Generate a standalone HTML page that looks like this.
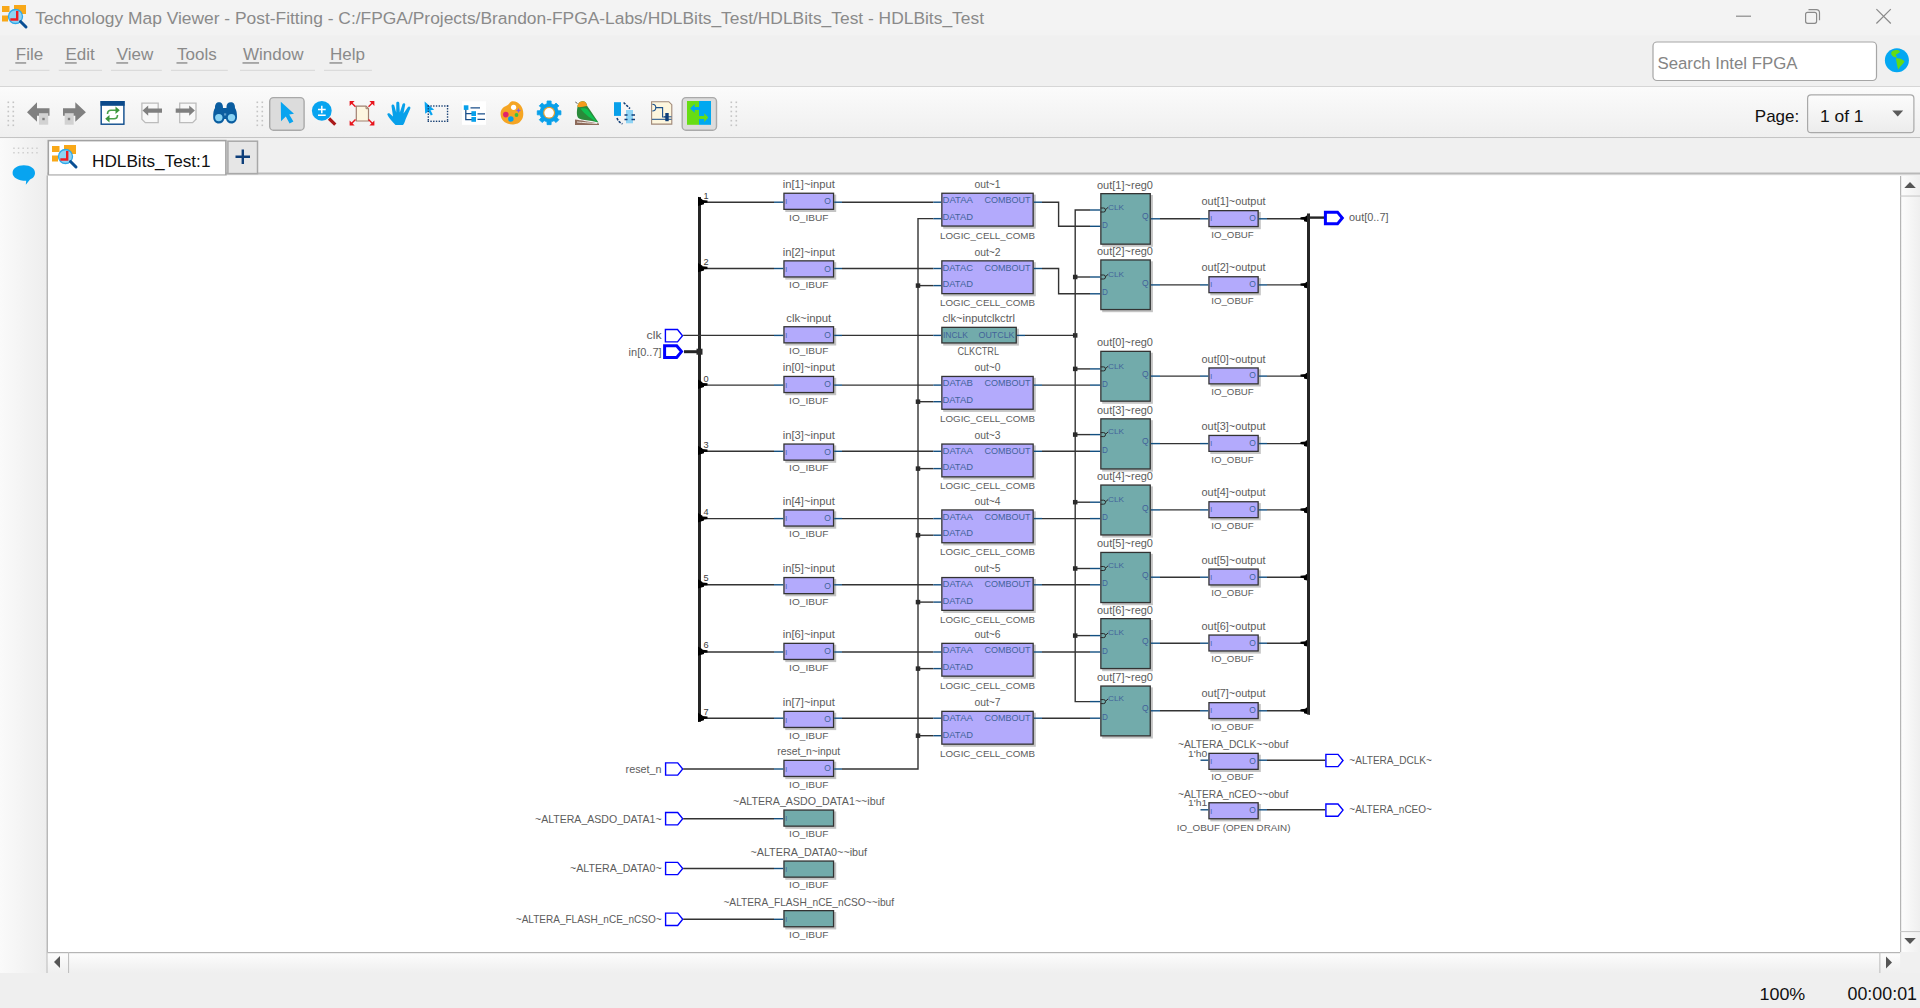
<!DOCTYPE html>
<html><head><meta charset="utf-8"><title>Technology Map Viewer</title>
<style>
html,body{margin:0;padding:0;width:1920px;height:1008px;overflow:hidden;background:#f0f0f0;font-family:"Liberation Sans", sans-serif;}
svg{position:absolute;left:0;top:0;}
text{font-family:"Liberation Sans", sans-serif;}
</style></head><body>
<svg width="1920" height="1008" viewBox="0 0 1920 1008">
<defs>
<linearGradient id="tb" x1="0" y1="0" x2="0" y2="1"><stop offset="0" stop-color="#fbfbfb"/><stop offset="1" stop-color="#efefef"/></linearGradient>
<linearGradient id="side" x1="0" y1="0" x2="1" y2="0"><stop offset="0" stop-color="#fafafa"/><stop offset="1" stop-color="#ededed"/></linearGradient>
<linearGradient id="vsb" x1="0" y1="0" x2="1" y2="0"><stop offset="0" stop-color="#fdfdfd"/><stop offset="1" stop-color="#efefef"/></linearGradient>
<linearGradient id="combo" x1="0" y1="0" x2="0" y2="1"><stop offset="0" stop-color="#fcfcfc"/><stop offset="1" stop-color="#ececec"/></linearGradient>
<linearGradient id="hsb" x1="0" y1="0" x2="0" y2="1"><stop offset="0" stop-color="#fdfdfd"/><stop offset="1" stop-color="#efefef"/></linearGradient>
</defs>
<!-- title bar -->
<rect x="0" y="0" width="1920" height="35.2" fill="#f3f3f3"/>
<g transform="translate(2,2) scale(1.0)">
<rect x="0" y="4" width="7.5" height="6" fill="#f8a818"/>
<rect x="0" y="13.5" width="6" height="6" fill="#f8a818"/>
<rect x="12" y="3" width="12" height="9" fill="#f8a818"/>
<circle cx="13.5" cy="14.5" r="7" fill="#8fd3f3" stroke="#2ea9ea" stroke-width="1.3"/>
<path d="M15.2,9 V17.5 H8.3" fill="none" stroke="#ee1c25" stroke-width="2.4"/>
<path d="M18.5,19.5 L24,25" stroke="#0a4f94" stroke-width="3" stroke-linecap="round"/>
</g>
<text x="35.2" y="23.7" font-size="17.4" fill="#8a8a8a">Technology Map Viewer - Post-Fitting - C:/FPGA/Projects/Brandon-FPGA-Labs/HDLBits_Test/HDLBits_Test - HDLBits_Test</text>
<rect x="1736" y="15.6" width="15" height="1.2" fill="#8a8a8a"/>
<path d="M1808.5,9.6 h7.8 a3.2,3.2 0 0 1 3.2,3.2 v7.5" fill="none" stroke="#8a8a8a" stroke-width="1.2"/>
<rect x="1805.6" y="12.3" width="11" height="11" rx="2" fill="none" stroke="#8a8a8a" stroke-width="1.2"/>
<path d="M1876.4,9.1 L1890.8,23.5 M1890.8,9.1 L1876.4,23.5" stroke="#8a8a8a" stroke-width="1.2"/>
<!-- menu bar -->
<rect x="0" y="35.2" width="1920" height="51.5" fill="#f0f0f0"/>
<rect x="0" y="86" width="1920" height="1" fill="#d6d6d6"/>
<text x="15.8" y="60.3" font-size="17" fill="#8a8a8a">File</text><rect x="15.3" y="62.3" width="10.884375" height="1.3" fill="#858585"/><rect x="9" y="69.8" width="40.5" height="1" fill="#d6d6d6"/><text x="65.4" y="60.3" font-size="17" fill="#8a8a8a">Edit</text><rect x="64.9" y="62.3" width="11.8390625" height="1.3" fill="#858585"/><rect x="58.75" y="69.8" width="43.25" height="1" fill="#d6d6d6"/><text x="116.8" y="60.3" font-size="17" fill="#8a8a8a">View</text><rect x="116.3" y="62.3" width="11.8390625" height="1.3" fill="#858585"/><rect x="111" y="69.8" width="50.80000000000001" height="1" fill="#d6d6d6"/><text x="177" y="60.3" font-size="17" fill="#8a8a8a">Tools</text><rect x="176.5" y="62.3" width="10.884375" height="1.3" fill="#858585"/><rect x="171" y="69.8" width="56.80000000000001" height="1" fill="#d6d6d6"/><text x="243" y="60.3" font-size="17" fill="#8a8a8a">Window</text><rect x="242.5" y="62.3" width="16.5453125" height="1.3" fill="#858585"/><rect x="240" y="69.8" width="75" height="1" fill="#d6d6d6"/><text x="330" y="60.3" font-size="17" fill="#8a8a8a">Help</text><rect x="329.5" y="62.3" width="12.7765625" height="1.3" fill="#858585"/><rect x="324" y="69.8" width="47.89999999999998" height="1" fill="#d6d6d6"/>
<rect x="1653" y="42" width="223.5" height="38.5" rx="4" fill="#fff" stroke="#a6a6a6" stroke-width="1.2"/>
<text x="1657.5" y="69.4" font-size="16.8" fill="#858585">Search Intel FPGA</text>
<circle cx="1896.9" cy="60.2" r="12" fill="#04a8f2"/>
<path d="M1891.2,53.3 C1891.2,51 1893.8,49.9 1897,49.9 C1899.2,49.9 1900.3,50.8 1899.8,52.3 C1898.5,53.5 1896.3,53.8 1895.8,55.3 C1896.2,56.3 1897.3,56.8 1896.8,57.4 C1894,57.6 1891.2,55.8 1891.2,53.3 Z" fill="#64dc14"/>
<path d="M1895.8,58.4 C1899,58 1902.2,59.2 1904.6,61.3 C1903.4,64 1900.4,65.8 1898.3,69.6 C1897.3,67 1896.8,63.5 1896.3,60.8 Z" fill="#64dc14"/>
<!-- toolbar -->
<rect x="0" y="87" width="1920" height="50.5" fill="url(#tb)"/>
<rect x="0" y="137" width="1920" height="1.2" fill="#c4c4c4"/>
<rect x="7.5" y="101.5" width="1.6" height="1.6" fill="#c4c4c4"/><rect x="12.5" y="101.5" width="1.6" height="1.6" fill="#c4c4c4"/><rect x="7.5" y="106.1" width="1.6" height="1.6" fill="#c4c4c4"/><rect x="12.5" y="106.1" width="1.6" height="1.6" fill="#c4c4c4"/><rect x="7.5" y="110.7" width="1.6" height="1.6" fill="#c4c4c4"/><rect x="12.5" y="110.7" width="1.6" height="1.6" fill="#c4c4c4"/><rect x="7.5" y="115.3" width="1.6" height="1.6" fill="#c4c4c4"/><rect x="12.5" y="115.3" width="1.6" height="1.6" fill="#c4c4c4"/><rect x="7.5" y="119.9" width="1.6" height="1.6" fill="#c4c4c4"/><rect x="12.5" y="119.9" width="1.6" height="1.6" fill="#c4c4c4"/><rect x="7.5" y="124.5" width="1.6" height="1.6" fill="#c4c4c4"/><rect x="12.5" y="124.5" width="1.6" height="1.6" fill="#c4c4c4"/>
<rect x="256.5" y="101.5" width="1.6" height="1.6" fill="#c4c4c4"/><rect x="261.5" y="101.5" width="1.6" height="1.6" fill="#c4c4c4"/><rect x="256.5" y="106.1" width="1.6" height="1.6" fill="#c4c4c4"/><rect x="261.5" y="106.1" width="1.6" height="1.6" fill="#c4c4c4"/><rect x="256.5" y="110.7" width="1.6" height="1.6" fill="#c4c4c4"/><rect x="261.5" y="110.7" width="1.6" height="1.6" fill="#c4c4c4"/><rect x="256.5" y="115.3" width="1.6" height="1.6" fill="#c4c4c4"/><rect x="261.5" y="115.3" width="1.6" height="1.6" fill="#c4c4c4"/><rect x="256.5" y="119.9" width="1.6" height="1.6" fill="#c4c4c4"/><rect x="261.5" y="119.9" width="1.6" height="1.6" fill="#c4c4c4"/><rect x="256.5" y="124.5" width="1.6" height="1.6" fill="#c4c4c4"/><rect x="261.5" y="124.5" width="1.6" height="1.6" fill="#c4c4c4"/>
<rect x="730.5" y="101.5" width="1.6" height="1.6" fill="#c4c4c4"/><rect x="735.5" y="101.5" width="1.6" height="1.6" fill="#c4c4c4"/><rect x="730.5" y="106.1" width="1.6" height="1.6" fill="#c4c4c4"/><rect x="735.5" y="106.1" width="1.6" height="1.6" fill="#c4c4c4"/><rect x="730.5" y="110.7" width="1.6" height="1.6" fill="#c4c4c4"/><rect x="735.5" y="110.7" width="1.6" height="1.6" fill="#c4c4c4"/><rect x="730.5" y="115.3" width="1.6" height="1.6" fill="#c4c4c4"/><rect x="735.5" y="115.3" width="1.6" height="1.6" fill="#c4c4c4"/><rect x="730.5" y="119.9" width="1.6" height="1.6" fill="#c4c4c4"/><rect x="735.5" y="119.9" width="1.6" height="1.6" fill="#c4c4c4"/><rect x="730.5" y="124.5" width="1.6" height="1.6" fill="#c4c4c4"/><rect x="735.5" y="124.5" width="1.6" height="1.6" fill="#c4c4c4"/>
<path d="M27,112.3 L37,102.3 L37,108.3 L49.5,108.3 L49.5,115.8 L37,115.8 L37,121.8 Z" fill="#808080"/><rect x="39" y="113.2" width="9.2" height="11.5" fill="#d2d2d2"/><rect x="42.3" y="117.8" width="2.4" height="2.4" fill="#808080"/>
<path d="M85.9,112.3 L75.3,102.3 L75.3,108.3 L63,108.3 L63,115.8 L75.3,115.8 L75.3,121.8 Z" fill="#808080"/><rect x="64.7" y="113.2" width="9" height="11.5" fill="#d2d2d2"/><rect x="67.8" y="117.8" width="2.4" height="2.4" fill="#808080"/>
<rect x="101.2" y="101.7" width="22.7" height="22.5" fill="#fff" stroke="#0b4a8b" stroke-width="1.4"/><rect x="100.5" y="101" width="24.1" height="4.8" fill="#0b4a8b"/><path d="M107.5,114 C107.5,111.5 108.5,110.2 111,110.2 H116.5" fill="none" stroke="#4aa04a" stroke-width="1.6"/><path d="M115.5,106.5 L119.8,110.2 L115.5,114 Z" fill="#3c963c"/><path d="M117.5,115 C117.5,117.5 116.5,118.8 114,118.8 H108.5" fill="none" stroke="#4aa04a" stroke-width="1.6"/><path d="M109.5,115 L105.2,118.8 L109.5,122.5 Z" fill="#3c963c"/>
<path d="M141.9,103.2 H158.2 V122.6 H145.3 L141.9,119.2 Z" fill="#f8f8f8" stroke="#bcbcbc" stroke-width="1.3"/><path d="M142.5,110.6 L148.2,105.5 V108.4 H162 V112.7 H148.2 V115.8 Z" fill="#808080"/>
<path d="M179.7,103.2 H196 V119.2 L192.6,122.6 H179.7 Z" fill="#f8f8f8" stroke="#bcbcbc" stroke-width="1.3"/><path d="M194.9,110.6 L189.2,105.5 V108.4 H175.7 V112.7 H189.2 V115.8 Z" fill="#808080"/>
<g fill="#0a5da0"><path d="M215,108 C215,104 216.5,102.3 219,102.3 C221.5,102.3 223,104 223,108 L224.5,108 C225.5,108 226.5,108 226.5,108 V107 C226.5,104 228,102.3 230.8,102.3 C233.5,102.3 235,104 235,108 C236.5,110 237,113 237,117 C237,121 234.5,123.5 231.5,123.5 C228.5,123.5 226.5,121.5 226,119 H224.3 C223.8,121.5 221.8,123.5 218.8,123.5 C215.5,123.5 213.2,121 213.2,117 C213.2,113 213.5,110 215,108 Z"/></g><circle cx="218.8" cy="117.6" r="3.7" fill="#88d2f3"/><circle cx="231.5" cy="117.6" r="3.7" fill="#88d2f3"/><rect x="224" y="113.3" width="2.2" height="2.2" fill="#5a9ac8"/>
<rect x="269.7" y="97.6" width="34.4" height="32.6" rx="3.8" fill="#dcdcdc" stroke="#a9a9a9" stroke-width="1.4"/><path d="M280.8,101.8 L294,113.8 L289.2,114.4 L293.4,121.6 L289.6,123.6 L285.8,116.6 L281,121.2 Z" fill="#08a4f0"/>
<path d="M329,118.5 L335.3,124.6" stroke="#aa1a1a" stroke-width="3.2"/><circle cx="321.8" cy="110.8" r="9.9" fill="#08a4f0"/><path d="M318,109.5 H325.7 M321.8,105.8 V113.2 M318,115.3 H325.7" stroke="#fff" stroke-width="1.5"/>
<path d="M356.3,106.2 H366 L368.5,108.7 V121 H356.3 Z" fill="#fdf6e0" stroke="#a08070" stroke-width="1.2"/><path d="M366,106.2 V108.7 H368.5" fill="none" stroke="#a08070" stroke-width="1"/><g stroke="#e8141c" stroke-width="1.4" fill="none"><path d="M350.5,101.8 L355.5,106.8"/><path d="M373.5,101.8 L368.5,106.8"/><path d="M350.5,124.6 L355.5,119.6"/><path d="M373.5,124.6 L368.5,119.6"/></g><g fill="#e8141c"><path d="M349.6,100.9 h5 l-5,5 z"/><path d="M374.4,100.9 h-5 l5,5 z"/><path d="M349.6,125.5 h5 l-5,-5 z"/><path d="M374.4,125.5 h-5 l5,-5 z"/></g>
<path d="M395.5,125 C392,121.5 388.5,117.5 387.4,114.8 C387,113.5 388.5,112.8 390,113.8 L393,116.5 L391.5,106 C391.3,104.3 393.8,103.8 394.3,105.5 L396.2,112.5 L396.3,103 C396.3,101.3 399.2,101.3 399.3,103 L399.8,112.5 L402.5,104.2 C403,102.5 405.6,103 405.2,104.8 L403.5,113.5 L407.8,107.2 C408.8,105.8 411,106.8 410.3,108.4 L405.5,119.5 C404.8,122 404,124 403,125 Z" fill="#08a0ea"/>
<path d="M424.6,101.5 L434.2,109.8 L430.5,110.2 L432.8,114.6 L430.8,115.5 L428.6,111.2 L425.2,113.8 Z" fill="#08a4f0"/><g fill="#163e72"><rect x="427.60" y="105.3" width="1.4" height="1.4"/><rect x="427.60" y="120.6" width="1.4" height="1.4"/><rect x="430.35" y="105.3" width="1.4" height="1.4"/><rect x="430.35" y="120.6" width="1.4" height="1.4"/><rect x="433.10" y="105.3" width="1.4" height="1.4"/><rect x="433.10" y="120.6" width="1.4" height="1.4"/><rect x="435.85" y="105.3" width="1.4" height="1.4"/><rect x="435.85" y="120.6" width="1.4" height="1.4"/><rect x="438.60" y="105.3" width="1.4" height="1.4"/><rect x="438.60" y="120.6" width="1.4" height="1.4"/><rect x="441.35" y="105.3" width="1.4" height="1.4"/><rect x="441.35" y="120.6" width="1.4" height="1.4"/><rect x="444.10" y="105.3" width="1.4" height="1.4"/><rect x="444.10" y="120.6" width="1.4" height="1.4"/><rect x="446.85" y="105.3" width="1.4" height="1.4"/><rect x="446.85" y="120.6" width="1.4" height="1.4"/><rect x="427.6" y="105.30" width="1.4" height="1.4"/><rect x="446.85" y="105.30" width="1.4" height="1.4"/><rect x="427.6" y="108.05" width="1.4" height="1.4"/><rect x="446.85" y="108.05" width="1.4" height="1.4"/><rect x="427.6" y="110.80" width="1.4" height="1.4"/><rect x="446.85" y="110.80" width="1.4" height="1.4"/><rect x="427.6" y="113.55" width="1.4" height="1.4"/><rect x="446.85" y="113.55" width="1.4" height="1.4"/><rect x="427.6" y="116.30" width="1.4" height="1.4"/><rect x="446.85" y="116.30" width="1.4" height="1.4"/><rect x="427.6" y="119.05" width="1.4" height="1.4"/><rect x="446.85" y="119.05" width="1.4" height="1.4"/></g>
<rect x="462" y="101.3" width="24" height="23.5" fill="#fff"/><g fill="none" stroke="#1a4f8a" stroke-width="1.3"><path d="M465.8,109 V119.6 H472 M465.8,113.6 H472"/><path d="M470.5,107.8 H480 M477.5,113.8 H485 M477.5,119.4 H485"/></g><rect x="463.8" y="105.3" width="4.6" height="4.6" fill="#08a0ea"/><rect x="471.4" y="111.2" width="4.6" height="4.8" fill="#08a0ea"/><rect x="471.4" y="117" width="4.6" height="4.8" fill="#08a0ea"/>
<path d="M513,101.3 C519,101.5 523.5,107 523.3,114 C523.2,119.5 520,124 513.5,124.4 C506.5,124.8 501,121 500.6,114.5 C500.3,110 503,107 506,106 C508,105.3 509,104 510,102.5 C510.8,101.6 511.8,101.3 513,101.3 Z" fill="#f5a524"/><circle cx="513.6" cy="107.3" r="2.6" fill="#fff"/><circle cx="505.8" cy="114.6" r="2.8" fill="#e2246a"/><circle cx="510.8" cy="119" r="2.8" fill="#08a0ea"/><circle cx="516.5" cy="115" r="1.9" fill="#3cc040"/><path d="M518.5,108 l0.8,1.8 l1.8,0.7 l-1.8,0.7 l-0.8,1.8 l-0.8,-1.8 l-1.8,-0.7 l1.8,-0.7 z" fill="#8a5ae0"/>
<path d="M547.07,100.97 L551.13,100.97 L551.15,103.73 L554.06,104.93 L556.03,103.00 L558.90,105.87 L556.97,107.84 L558.17,110.75 L560.93,110.77 L560.93,114.83 L558.17,114.85 L556.97,117.76 L558.90,119.73 L556.03,122.60 L554.06,120.67 L551.15,121.87 L551.13,124.63 L547.07,124.63 L547.05,121.87 L544.14,120.67 L542.17,122.60 L539.30,119.73 L541.23,117.76 L540.03,114.85 L537.27,114.83 L537.27,110.77 L540.03,110.75 L541.23,107.84 L539.30,105.87 L542.17,103.00 L544.14,104.93 L547.05,103.73 Z" fill="#08a0ea" stroke="#08a0ea" stroke-width="0.8" stroke-linejoin="round"/><circle cx="549.1" cy="112.8" r="6" fill="#e8a030"/><circle cx="549.1" cy="112.8" r="4.8" fill="#fff"/>
<path d="M575,125 L575,119.5 C580,120 590,122 599,123.5 V125 Z" fill="#8c6a5a"/><path d="M577,122 C583,122.5 590,123 597,123.5" stroke="#f4eeea" stroke-width="0.9" fill="none"/><path d="M577.5,107 C577.5,104 579.5,101.5 582.5,101.3 C585,101.2 586.8,103 587.2,106 C590,110 594,116 598.5,122.5 L592,121 C587,120 582,120 579,118.5 C576.5,117 576.5,112 577.5,107 Z" fill="#2a8a3a"/><path d="M577.5,107 C577.5,104 579.5,101.5 582.5,101.3 C585,101.2 586.8,103 587.2,106 C584,106.5 580,107.5 577.5,107 Z" fill="#f59a1c"/><path d="M580.5,108.5 C584,108 587,108 588,110 C591,114 594,118 597.5,122.5 C592,119 585,115 580.5,108.5 Z" fill="#10c050"/><path d="M575.3,102 L577.5,103.5" stroke="#333" stroke-width="0.8"/>
<rect x="614" y="102.2" width="7" height="13.7" fill="#08a0ea"/><path d="M623.6,102.5 L630,108.6 M617,118 C618,121 620,123 622.5,123.8" fill="none" stroke="#123f78" stroke-width="1.6" stroke-dasharray="2.5,1.2"/><rect x="626" y="110" width="7" height="13.3" fill="#8ed3f4"/><path d="M624.5,115 H627.5 M631.5,115 H635 M624.5,119.5 H627.5 M631.5,119.5 H635" stroke="#123f78" stroke-width="1.3"/>
<path d="M651.6,101.7 H668.8 L671.8,104.7 V124.1 H651.6 Z" fill="#fdf6de" stroke="#a08878" stroke-width="1.1"/><path d="M652.3,104.2 C654.5,104.2 655.8,105.8 655.8,107.6 C655.8,109.4 654.5,111 652.3,111" fill="none" stroke="#1a4f8a" stroke-width="1.1"/><path d="M655.8,107.6 H662.6 V117 H666" fill="none" stroke="#1a4f8a" stroke-width="1.1"/><path d="M652,119.3 H671.5 M664,116.8 H671.5" stroke="#1a4f8a" stroke-width="1"/><rect x="665.3" y="113" width="3.4" height="8.2" fill="#0e3f7a"/>
<rect x="682.2" y="97.6" width="34.3" height="32.6" rx="3.8" fill="#dcdcdc" stroke="#a9a9a9" stroke-width="1.4"/><rect x="687" y="101" width="12" height="23.8" fill="#66dd14"/><rect x="699" y="101" width="12" height="23.8" fill="#00a8f0"/><path d="M690.1,108.5 L694.7,104.1 V106.9 H699 V110.1 H694.7 V112.8 Z" fill="#00a8f0"/><path d="M708.3,117.5 L704.3,113.2 V116 H699 V119 H704.3 V122 Z" fill="#66dd14"/>
<text x="1754.8" y="122" font-size="17" fill="#111">Page:</text>
<rect x="1807.6" y="94.9" width="106.3" height="37.8" rx="3.5" fill="url(#combo)" stroke="#a9a9a9" stroke-width="1.2"/>
<text x="1820" y="122" font-size="17.4" fill="#111">1 of 1</text>
<path d="M1892.2,110.6 h11 l-5.5,5.8 z" fill="#5a5a5a"/>
<!-- tab area -->
<rect x="0" y="138.2" width="1920" height="37.8" fill="#f0f0f0"/>
<rect x="0" y="138.2" width="47.5" height="834.8" fill="url(#side)"/>
<g fill="#cfcfcf"><rect x="13.2" y="147.5" width="1.5" height="1.5"/><rect x="13.2" y="152.0" width="1.5" height="1.5"/><rect x="17.799999999999997" y="147.5" width="1.5" height="1.5"/><rect x="17.799999999999997" y="152.0" width="1.5" height="1.5"/><rect x="22.4" y="147.5" width="1.5" height="1.5"/><rect x="22.4" y="152.0" width="1.5" height="1.5"/><rect x="27.0" y="147.5" width="1.5" height="1.5"/><rect x="27.0" y="152.0" width="1.5" height="1.5"/><rect x="31.599999999999998" y="147.5" width="1.5" height="1.5"/><rect x="31.599999999999998" y="152.0" width="1.5" height="1.5"/><rect x="36.2" y="147.5" width="1.5" height="1.5"/><rect x="36.2" y="152.0" width="1.5" height="1.5"/></g>
<path d="M23.8,165.3 C30.5,165.3 35,168.5 35,173 C35,176.5 32.5,178.5 30,179.5 L25.8,184.8 L26.2,180.8 C18,180.8 12.6,177.5 12.6,173 C12.6,168.5 17.3,165.3 23.8,165.3 Z" fill="#08a4f0"/>
<rect x="47.5" y="172.5" width="1873" height="2" fill="#b9b9b9"/>
<rect x="48.3" y="140.6" width="177.6" height="34.6" fill="#fff" stroke="#a2a2a2" stroke-width="1.6"/>
<g transform="translate(52,142) scale(1.0)">
<rect x="0" y="4" width="7.5" height="6" fill="#f8a818"/>
<rect x="0" y="13.5" width="6" height="6" fill="#f8a818"/>
<rect x="12" y="3" width="12" height="9" fill="#f8a818"/>
<circle cx="13.5" cy="14.5" r="7" fill="#8fd3f3" stroke="#2ea9ea" stroke-width="1.3"/>
<path d="M15.2,9 V17.5 H8.3" fill="none" stroke="#ee1c25" stroke-width="2.4"/>
<path d="M18.5,19.5 L24,25" stroke="#0a4f94" stroke-width="3" stroke-linecap="round"/>
</g>
<text x="92" y="167" font-size="17.2" fill="#111">HDLBits_Test:1</text>
<rect x="227.9" y="141.2" width="29.6" height="32.4" fill="#e6e6e6" stroke="#a8a8a8" stroke-width="1.5"/>
<path d="M235.5,156.8 H250 M242.8,149.5 V164" stroke="#0e3f7a" stroke-width="2.4"/>
<!-- content -->
<rect x="47.5" y="175.5" width="1852.8" height="776.5" fill="#fff"/>
<rect x="46" y="175.5" width="0.9" height="797.5" fill="#dadada"/><rect x="46.8" y="175.5" width="1.2" height="797.5" fill="#b8b8b8"/>
<!-- vertical scrollbar -->
<rect x="1900.3" y="176" width="19.7" height="776" fill="url(#vsb)"/>
<rect x="1900" y="176" width="1.2" height="776" fill="#b5b5b5"/>
<rect x="1900" y="195.5" width="20" height="1.1" fill="#c8c8c8"/>
<path d="M1904.3,188 L1910,182 L1915.8,188 Z" fill="#555"/>
<rect x="1900" y="931" width="20" height="1.1" fill="#c8c8c8"/>
<path d="M1904.3,938 L1910,944 L1915.8,938 Z" fill="#555"/>
<!-- horizontal scrollbar -->
<rect x="47.5" y="952.5" width="1853" height="20.5" fill="url(#hsb)"/>
<rect x="47.5" y="952" width="1853" height="1.2" fill="#b5b5b5"/>
<rect x="68" y="952" width="1.1" height="21" fill="#c0c0c0"/>
<path d="M54,962 L60,956 L60,968 Z" fill="#555"/>
<rect x="1879.3" y="952" width="1.1" height="21" fill="#c0c0c0"/>
<path d="M1892,962.5 L1886,956.5 L1886,968.5 Z" fill="#555"/>
<rect x="1900.3" y="952" width="19.7" height="21" fill="#f0f0f0"/>
<!-- status -->
<rect x="0" y="973" width="1920" height="35" fill="#efefef"/>
<text x="1759.5" y="1000" font-size="17.4" fill="#111" textLength="45.8" lengthAdjust="spacingAndGlyphs">100%</text>
<text x="1847.5" y="1000" font-size="17.8" fill="#111" textLength="69.5" lengthAdjust="spacingAndGlyphs">00:00:01</text>
<!-- schematic -->
<g>
<line x1="699.5" y1="197" x2="699.5" y2="721.8" stroke="#262626" stroke-width="3"/>
<path d="M701.0,202.2 L774,202.2" fill="none" stroke="#333333" stroke-width="1.4" stroke-linejoin="miter"/>
<path d="M698.0,196.7 L702.5,199.39999999999998 L702.5,200.0 L707.5,200.39999999999998 L707.5,202.6 L704.0,203.0 L704.0,204.2 L698.0,206.0 Z" fill="#000"/>
<text x="703.6" y="198.6" font-size="9.2" fill="#3a3a3a" text-anchor="start" >1</text>
<rect x="785.3" y="194.59999999999997" width="50.90000000000009" height="17.400000000000006" fill="#c4c4c4"/>
<rect x="783.9499999999999" y="193.24999999999997" width="49.600000000000094" height="16.100000000000005" fill="#b3aafc" stroke="#333" stroke-width="1.3"/>
<line x1="774" y1="202.2" x2="783.3" y2="202.2" stroke="#134f80" stroke-width="1.4"/>
<line x1="834.2" y1="202.2" x2="842" y2="202.2" stroke="#134f80" stroke-width="1.4"/>
<text x="785.3" y="204.39999999999998" font-size="7" fill="#42639a" text-anchor="start" >I</text>
<text x="824.3" y="204.2" font-size="8.5" fill="#42639a" text-anchor="start" >O</text>
<text x="808.75" y="188.09999999999997" font-size="11" fill="#5c5c5c" text-anchor="middle" textLength="52" lengthAdjust="spacingAndGlyphs" >in[1]~input</text>
<text x="808.75" y="220.49999999999997" font-size="9.5" fill="#5c5c5c" text-anchor="middle" textLength="39.3" lengthAdjust="spacingAndGlyphs" >IO_IBUF</text>
<path d="M701.0,268.5 L774,268.5" fill="none" stroke="#333333" stroke-width="1.4" stroke-linejoin="miter"/>
<path d="M698.0,263.0 L702.5,265.7 L702.5,266.3 L707.5,266.7 L707.5,268.9 L704.0,269.3 L704.0,270.5 L698.0,272.3 Z" fill="#000"/>
<text x="703.6" y="264.9" font-size="9.2" fill="#3a3a3a" text-anchor="start" >2</text>
<rect x="785.3" y="262.2" width="50.90000000000009" height="17.400000000000034" fill="#c4c4c4"/>
<rect x="783.9499999999999" y="260.84999999999997" width="49.600000000000094" height="16.100000000000033" fill="#b3aafc" stroke="#333" stroke-width="1.3"/>
<line x1="774" y1="268.5" x2="783.3" y2="268.5" stroke="#134f80" stroke-width="1.4"/>
<line x1="834.2" y1="268.5" x2="842" y2="268.5" stroke="#134f80" stroke-width="1.4"/>
<text x="785.3" y="272.0" font-size="7" fill="#42639a" text-anchor="start" >I</text>
<text x="824.3" y="271.8" font-size="8.5" fill="#42639a" text-anchor="start" >O</text>
<text x="808.75" y="255.7" font-size="11" fill="#5c5c5c" text-anchor="middle" textLength="52" lengthAdjust="spacingAndGlyphs" >in[2]~input</text>
<text x="808.75" y="288.1" font-size="9.5" fill="#5c5c5c" text-anchor="middle" textLength="39.3" lengthAdjust="spacingAndGlyphs" >IO_IBUF</text>
<path d="M701.0,385.1 L774,385.1" fill="none" stroke="#333333" stroke-width="1.4" stroke-linejoin="miter"/>
<path d="M698.0,379.6 L702.5,382.3 L702.5,382.90000000000003 L707.5,383.3 L707.5,385.5 L704.0,385.90000000000003 L704.0,387.1 L698.0,388.90000000000003 Z" fill="#000"/>
<text x="703.6" y="381.5" font-size="9.2" fill="#3a3a3a" text-anchor="start" >0</text>
<rect x="785.3" y="377.8" width="50.90000000000009" height="17.400000000000034" fill="#c4c4c4"/>
<rect x="783.9499999999999" y="376.45" width="49.600000000000094" height="16.100000000000033" fill="#b3aafc" stroke="#333" stroke-width="1.3"/>
<line x1="774" y1="385.1" x2="783.3" y2="385.1" stroke="#134f80" stroke-width="1.4"/>
<line x1="834.2" y1="385.1" x2="842" y2="385.1" stroke="#134f80" stroke-width="1.4"/>
<text x="785.3" y="387.6" font-size="7" fill="#42639a" text-anchor="start" >I</text>
<text x="824.3" y="387.40000000000003" font-size="8.5" fill="#42639a" text-anchor="start" >O</text>
<text x="808.75" y="371.3" font-size="11" fill="#5c5c5c" text-anchor="middle" textLength="52" lengthAdjust="spacingAndGlyphs" >in[0]~input</text>
<text x="808.75" y="403.70000000000005" font-size="9.5" fill="#5c5c5c" text-anchor="middle" textLength="39.3" lengthAdjust="spacingAndGlyphs" >IO_IBUF</text>
<path d="M701.0,451.3 L774,451.3" fill="none" stroke="#333333" stroke-width="1.4" stroke-linejoin="miter"/>
<path d="M698.0,445.8 L702.5,448.5 L702.5,449.1 L707.5,449.5 L707.5,451.7 L704.0,452.1 L704.0,453.3 L698.0,455.1 Z" fill="#000"/>
<text x="703.6" y="447.7" font-size="9.2" fill="#3a3a3a" text-anchor="start" >3</text>
<rect x="785.3" y="445.4" width="50.90000000000009" height="17.400000000000034" fill="#c4c4c4"/>
<rect x="783.9499999999999" y="444.04999999999995" width="49.600000000000094" height="16.100000000000033" fill="#b3aafc" stroke="#333" stroke-width="1.3"/>
<line x1="774" y1="451.3" x2="783.3" y2="451.3" stroke="#134f80" stroke-width="1.4"/>
<line x1="834.2" y1="451.3" x2="842" y2="451.3" stroke="#134f80" stroke-width="1.4"/>
<text x="785.3" y="455.2" font-size="7" fill="#42639a" text-anchor="start" >I</text>
<text x="824.3" y="455.0" font-size="8.5" fill="#42639a" text-anchor="start" >O</text>
<text x="808.75" y="438.9" font-size="11" fill="#5c5c5c" text-anchor="middle" textLength="52" lengthAdjust="spacingAndGlyphs" >in[3]~input</text>
<text x="808.75" y="471.3" font-size="9.5" fill="#5c5c5c" text-anchor="middle" textLength="39.3" lengthAdjust="spacingAndGlyphs" >IO_IBUF</text>
<path d="M701.0,518.6 L774,518.6" fill="none" stroke="#333333" stroke-width="1.4" stroke-linejoin="miter"/>
<path d="M698.0,513.1 L702.5,515.8000000000001 L702.5,516.4 L707.5,516.8000000000001 L707.5,519.0 L704.0,519.4 L704.0,520.6 L698.0,522.4 Z" fill="#000"/>
<text x="703.6" y="515.0" font-size="9.2" fill="#3a3a3a" text-anchor="start" >4</text>
<rect x="785.3" y="511.3" width="50.90000000000009" height="17.400000000000034" fill="#c4c4c4"/>
<rect x="783.9499999999999" y="509.95" width="49.600000000000094" height="16.100000000000033" fill="#b3aafc" stroke="#333" stroke-width="1.3"/>
<line x1="774" y1="518.6" x2="783.3" y2="518.6" stroke="#134f80" stroke-width="1.4"/>
<line x1="834.2" y1="518.6" x2="842" y2="518.6" stroke="#134f80" stroke-width="1.4"/>
<text x="785.3" y="521.1" font-size="7" fill="#42639a" text-anchor="start" >I</text>
<text x="824.3" y="520.9" font-size="8.5" fill="#42639a" text-anchor="start" >O</text>
<text x="808.75" y="504.8" font-size="11" fill="#5c5c5c" text-anchor="middle" textLength="52" lengthAdjust="spacingAndGlyphs" >in[4]~input</text>
<text x="808.75" y="537.2" font-size="9.5" fill="#5c5c5c" text-anchor="middle" textLength="39.3" lengthAdjust="spacingAndGlyphs" >IO_IBUF</text>
<path d="M701.0,584.8 L774,584.8" fill="none" stroke="#333333" stroke-width="1.4" stroke-linejoin="miter"/>
<path d="M698.0,579.3 L702.5,582.0 L702.5,582.5999999999999 L707.5,583.0 L707.5,585.1999999999999 L704.0,585.5999999999999 L704.0,586.8 L698.0,588.5999999999999 Z" fill="#000"/>
<text x="703.6" y="581.1999999999999" font-size="9.2" fill="#3a3a3a" text-anchor="start" >5</text>
<rect x="785.3" y="578.9" width="50.90000000000009" height="17.399999999999977" fill="#c4c4c4"/>
<rect x="783.9499999999999" y="577.55" width="49.600000000000094" height="16.099999999999977" fill="#b3aafc" stroke="#333" stroke-width="1.3"/>
<line x1="774" y1="584.8" x2="783.3" y2="584.8" stroke="#134f80" stroke-width="1.4"/>
<line x1="834.2" y1="584.8" x2="842" y2="584.8" stroke="#134f80" stroke-width="1.4"/>
<text x="785.3" y="588.6999999999999" font-size="7" fill="#42639a" text-anchor="start" >I</text>
<text x="824.3" y="588.4999999999999" font-size="8.5" fill="#42639a" text-anchor="start" >O</text>
<text x="808.75" y="572.4" font-size="11" fill="#5c5c5c" text-anchor="middle" textLength="52" lengthAdjust="spacingAndGlyphs" >in[5]~input</text>
<text x="808.75" y="604.8" font-size="9.5" fill="#5c5c5c" text-anchor="middle" textLength="39.3" lengthAdjust="spacingAndGlyphs" >IO_IBUF</text>
<path d="M701.0,652.0 L774,652.0" fill="none" stroke="#333333" stroke-width="1.4" stroke-linejoin="miter"/>
<path d="M698.0,646.5 L702.5,649.2 L702.5,649.8 L707.5,650.2 L707.5,652.4 L704.0,652.8 L704.0,654.0 L698.0,655.8 Z" fill="#000"/>
<text x="703.6" y="648.4" font-size="9.2" fill="#3a3a3a" text-anchor="start" >6</text>
<rect x="785.3" y="644.7" width="50.90000000000009" height="17.399999999999977" fill="#c4c4c4"/>
<rect x="783.9499999999999" y="643.35" width="49.600000000000094" height="16.099999999999977" fill="#b3aafc" stroke="#333" stroke-width="1.3"/>
<line x1="774" y1="652.0" x2="783.3" y2="652.0" stroke="#134f80" stroke-width="1.4"/>
<line x1="834.2" y1="652.0" x2="842" y2="652.0" stroke="#134f80" stroke-width="1.4"/>
<text x="785.3" y="654.5" font-size="7" fill="#42639a" text-anchor="start" >I</text>
<text x="824.3" y="654.3" font-size="8.5" fill="#42639a" text-anchor="start" >O</text>
<text x="808.75" y="638.2" font-size="11" fill="#5c5c5c" text-anchor="middle" textLength="52" lengthAdjust="spacingAndGlyphs" >in[6]~input</text>
<text x="808.75" y="670.6" font-size="9.5" fill="#5c5c5c" text-anchor="middle" textLength="39.3" lengthAdjust="spacingAndGlyphs" >IO_IBUF</text>
<path d="M701.0,718.2 L774,718.2" fill="none" stroke="#333333" stroke-width="1.4" stroke-linejoin="miter"/>
<path d="M698.0,712.7 L702.5,715.4000000000001 L702.5,716.0 L707.5,716.4000000000001 L707.5,718.6 L704.0,719.0 L704.0,720.2 L698.0,722.0 Z" fill="#000"/>
<text x="703.6" y="714.6" font-size="9.2" fill="#3a3a3a" text-anchor="start" >7</text>
<rect x="785.3" y="712.7" width="50.90000000000009" height="17.399999999999977" fill="#c4c4c4"/>
<rect x="783.9499999999999" y="711.35" width="49.600000000000094" height="16.099999999999977" fill="#b3aafc" stroke="#333" stroke-width="1.3"/>
<line x1="774" y1="718.2" x2="783.3" y2="718.2" stroke="#134f80" stroke-width="1.4"/>
<line x1="834.2" y1="718.2" x2="842" y2="718.2" stroke="#134f80" stroke-width="1.4"/>
<text x="785.3" y="722.5" font-size="7" fill="#42639a" text-anchor="start" >I</text>
<text x="824.3" y="722.3" font-size="8.5" fill="#42639a" text-anchor="start" >O</text>
<text x="808.75" y="706.2" font-size="11" fill="#5c5c5c" text-anchor="middle" textLength="52" lengthAdjust="spacingAndGlyphs" >in[7]~input</text>
<text x="808.75" y="738.6" font-size="9.5" fill="#5c5c5c" text-anchor="middle" textLength="39.3" lengthAdjust="spacingAndGlyphs" >IO_IBUF</text>
<path d="M665.4000000000001,329.55 L677.5,329.55 L682.5,335.7 L677.5,341.84999999999997 L665.4000000000001,341.84999999999997 Z" fill="#fff" stroke="#0000ff" stroke-width="1.4" stroke-linejoin="miter" stroke-miterlimit="3"/>
<path d="M683.2,335.4 L774,335.4" fill="none" stroke="#333333" stroke-width="1.4" stroke-linejoin="miter"/>
<text x="661.6" y="339.2" font-size="10.5" fill="#5c5c5c" text-anchor="end" textLength="15" lengthAdjust="spacingAndGlyphs" >clk</text>
<rect x="785.3" y="328.09999999999997" width="50.90000000000009" height="17.400000000000034" fill="#c4c4c4"/>
<rect x="783.9499999999999" y="326.74999999999994" width="49.600000000000094" height="16.100000000000033" fill="#b3aafc" stroke="#333" stroke-width="1.3"/>
<line x1="774" y1="335.4" x2="783.3" y2="335.4" stroke="#134f80" stroke-width="1.4"/>
<line x1="834.2" y1="335.4" x2="842" y2="335.4" stroke="#134f80" stroke-width="1.4"/>
<text x="785.3" y="337.9" font-size="7" fill="#42639a" text-anchor="start" >I</text>
<text x="824.3" y="337.7" font-size="8.5" fill="#42639a" text-anchor="start" >O</text>
<text x="808.75" y="321.59999999999997" font-size="11" fill="#5c5c5c" text-anchor="middle" textLength="45" lengthAdjust="spacingAndGlyphs" >clk~input</text>
<text x="808.75" y="354.0" font-size="9.5" fill="#5c5c5c" text-anchor="middle" textLength="39.3" lengthAdjust="spacingAndGlyphs" >IO_IBUF</text>
<path d="M664.6,345.75 L676.7,345.75 L681.5,351.6 L676.7,357.45000000000005 L664.6,357.45000000000005 Z" fill="#fff" stroke="#0000ff" stroke-width="3.0" stroke-linejoin="miter" stroke-miterlimit="3"/>
<line x1="684" y1="351.7" x2="699.5" y2="351.7" stroke="#262626" stroke-width="3"/>
<rect x="696.5" y="348.7" width="6" height="6" fill="#2a2a2a"/>
<text x="661.6" y="355.5" font-size="10.5" fill="#5c5c5c" text-anchor="end" textLength="33" lengthAdjust="spacingAndGlyphs" >in[0..7]</text>
<path d="M665.6,762.85 L677.6999999999999,762.85 L682.6999999999999,769.0 L677.6999999999999,775.15 L665.6,775.15 Z" fill="#fff" stroke="#0000ff" stroke-width="1.4" stroke-linejoin="miter" stroke-miterlimit="3"/>
<path d="M683.2,769.0 L774,769.0" fill="none" stroke="#333333" stroke-width="1.4" stroke-linejoin="miter"/>
<text x="661.6" y="772.8" font-size="10.5" fill="#5c5c5c" text-anchor="end" textLength="36" lengthAdjust="spacingAndGlyphs" >reset_n</text>
<rect x="785.3" y="761.7" width="50.90000000000009" height="17.399999999999977" fill="#c4c4c4"/>
<rect x="783.9499999999999" y="760.35" width="49.600000000000094" height="16.099999999999977" fill="#b3aafc" stroke="#333" stroke-width="1.3"/>
<line x1="774" y1="769.0" x2="783.3" y2="769.0" stroke="#134f80" stroke-width="1.4"/>
<line x1="834.2" y1="769.0" x2="842" y2="769.0" stroke="#134f80" stroke-width="1.4"/>
<text x="785.3" y="771.5" font-size="7" fill="#42639a" text-anchor="start" >I</text>
<text x="824.3" y="771.3" font-size="8.5" fill="#42639a" text-anchor="start" >O</text>
<text x="808.75" y="755.2" font-size="11" fill="#5c5c5c" text-anchor="middle" textLength="63" lengthAdjust="spacingAndGlyphs" >reset_n~input</text>
<text x="808.75" y="787.6" font-size="9.5" fill="#5c5c5c" text-anchor="middle" textLength="39.3" lengthAdjust="spacingAndGlyphs" >IO_IBUF</text>
<path d="M665.6,812.5500000000001 L677.6999999999999,812.5500000000001 L682.6999999999999,818.7 L677.6999999999999,824.85 L665.6,824.85 Z" fill="#fff" stroke="#0000ff" stroke-width="1.4" stroke-linejoin="miter" stroke-miterlimit="3"/>
<path d="M683.2,818.7 L774,818.7" fill="none" stroke="#333333" stroke-width="1.4" stroke-linejoin="miter"/>
<text x="661.6" y="822.5" font-size="10.5" fill="#5c5c5c" text-anchor="end" textLength="126.6" lengthAdjust="spacingAndGlyphs" >~ALTERA_ASDO_DATA1~</text>
<rect x="785.3" y="811.4000000000001" width="50.90000000000009" height="17.399999999999977" fill="#c4c4c4"/>
<rect x="783.9499999999999" y="810.0500000000001" width="49.600000000000094" height="16.099999999999977" fill="#72abab" stroke="#333" stroke-width="1.3"/>
<line x1="774" y1="818.7" x2="783.3" y2="818.7" stroke="#134f80" stroke-width="1.4"/>
<text x="785.3" y="821.2" font-size="7" fill="#42639a" text-anchor="start" >I</text>
<text x="808.75" y="804.9000000000001" font-size="11" fill="#5c5c5c" text-anchor="middle" textLength="151.7" lengthAdjust="spacingAndGlyphs" >~ALTERA_ASDO_DATA1~~ibuf</text>
<text x="808.75" y="837.3000000000001" font-size="9.5" fill="#5c5c5c" text-anchor="middle" textLength="39.3" lengthAdjust="spacingAndGlyphs" >IO_IBUF</text>
<path d="M665.6,862.35 L677.6999999999999,862.35 L682.6999999999999,868.5 L677.6999999999999,874.65 L665.6,874.65 Z" fill="#fff" stroke="#0000ff" stroke-width="1.4" stroke-linejoin="miter" stroke-miterlimit="3"/>
<path d="M683.2,868.5 L774,868.5" fill="none" stroke="#333333" stroke-width="1.4" stroke-linejoin="miter"/>
<text x="661.6" y="872.3" font-size="10.5" fill="#5c5c5c" text-anchor="end" textLength="91.6" lengthAdjust="spacingAndGlyphs" >~ALTERA_DATA0~</text>
<rect x="785.3" y="862.4000000000001" width="50.90000000000009" height="17.399999999999977" fill="#c4c4c4"/>
<rect x="783.9499999999999" y="861.0500000000001" width="49.600000000000094" height="16.099999999999977" fill="#72abab" stroke="#333" stroke-width="1.3"/>
<line x1="774" y1="868.5" x2="783.3" y2="868.5" stroke="#134f80" stroke-width="1.4"/>
<text x="785.3" y="872.2" font-size="7" fill="#42639a" text-anchor="start" >I</text>
<text x="808.75" y="855.9000000000001" font-size="11" fill="#5c5c5c" text-anchor="middle" textLength="116.7" lengthAdjust="spacingAndGlyphs" >~ALTERA_DATA0~~ibuf</text>
<text x="808.75" y="888.3000000000001" font-size="9.5" fill="#5c5c5c" text-anchor="middle" textLength="39.3" lengthAdjust="spacingAndGlyphs" >IO_IBUF</text>
<path d="M665.6,913.15 L677.6999999999999,913.15 L682.6999999999999,919.3 L677.6999999999999,925.4499999999999 L665.6,925.4499999999999 Z" fill="#fff" stroke="#0000ff" stroke-width="1.4" stroke-linejoin="miter" stroke-miterlimit="3"/>
<path d="M683.2,919.3 L774,919.3" fill="none" stroke="#333333" stroke-width="1.4" stroke-linejoin="miter"/>
<text x="661.6" y="923.0999999999999" font-size="10.5" fill="#5c5c5c" text-anchor="end" textLength="145.8" lengthAdjust="spacingAndGlyphs" >~ALTERA_FLASH_nCE_nCSO~</text>
<rect x="785.3" y="912.0" width="50.90000000000009" height="17.399999999999977" fill="#c4c4c4"/>
<rect x="783.9499999999999" y="910.65" width="49.600000000000094" height="16.099999999999977" fill="#72abab" stroke="#333" stroke-width="1.3"/>
<line x1="774" y1="919.3" x2="783.3" y2="919.3" stroke="#134f80" stroke-width="1.4"/>
<text x="785.3" y="921.8" font-size="7" fill="#42639a" text-anchor="start" >I</text>
<text x="808.75" y="905.5" font-size="11" fill="#5c5c5c" text-anchor="middle" textLength="170.7" lengthAdjust="spacingAndGlyphs" >~ALTERA_FLASH_nCE_nCSO~~ibuf</text>
<text x="808.75" y="937.9" font-size="9.5" fill="#5c5c5c" text-anchor="middle" textLength="39.3" lengthAdjust="spacingAndGlyphs" >IO_IBUF</text>
<path d="M842,202.2 L933.3,202.2" fill="none" stroke="#333333" stroke-width="1.4" stroke-linejoin="miter"/>
<rect x="943.2" y="194.59999999999997" width="92.59999999999991" height="34.10000000000002" fill="#c4c4c4"/>
<rect x="941.85" y="193.24999999999997" width="91.29999999999991" height="32.800000000000026" fill="#b3aafc" stroke="#333" stroke-width="1.3"/>
<line x1="933.3" y1="202.2" x2="941.2" y2="202.2" stroke="#134f80" stroke-width="1.4"/>
<line x1="933.3" y1="218.64999999999998" x2="941.2" y2="218.64999999999998" stroke="#134f80" stroke-width="1.4"/>
<line x1="1033.8" y1="202.2" x2="1042" y2="202.2" stroke="#134f80" stroke-width="1.4"/>
<text x="942.5" y="202.89999999999998" font-size="8.2" fill="#42639a" text-anchor="start" textLength="30.5" lengthAdjust="spacingAndGlyphs" >DATAA</text>
<text x="942.5" y="219.49999999999997" font-size="8.2" fill="#42639a" text-anchor="start" textLength="30.5" lengthAdjust="spacingAndGlyphs" >DATAD</text>
<text x="1030.5" y="202.89999999999998" font-size="8.2" fill="#42639a" text-anchor="end" textLength="46" lengthAdjust="spacingAndGlyphs" >COMBOUT</text>
<text x="987.5" y="187.89999999999998" font-size="10.5" fill="#5c5c5c" text-anchor="middle" textLength="26.2" lengthAdjust="spacingAndGlyphs" >out~1</text>
<text x="987.5" y="238.49999999999997" font-size="9.4" fill="#5c5c5c" text-anchor="middle" textLength="95" lengthAdjust="spacingAndGlyphs" >LOGIC_CELL_COMB</text>
<path d="M842,268.5 L933.3,268.5" fill="none" stroke="#333333" stroke-width="1.4" stroke-linejoin="miter"/>
<rect x="943.2" y="262.2" width="92.59999999999991" height="34.10000000000002" fill="#c4c4c4"/>
<rect x="941.85" y="260.84999999999997" width="91.29999999999991" height="32.800000000000026" fill="#b3aafc" stroke="#333" stroke-width="1.3"/>
<line x1="933.3" y1="268.5" x2="941.2" y2="268.5" stroke="#134f80" stroke-width="1.4"/>
<line x1="933.3" y1="285.6" x2="941.2" y2="285.6" stroke="#134f80" stroke-width="1.4"/>
<line x1="1033.8" y1="268.5" x2="1042" y2="268.5" stroke="#134f80" stroke-width="1.4"/>
<text x="942.5" y="270.5" font-size="8.2" fill="#42639a" text-anchor="start" textLength="30.5" lengthAdjust="spacingAndGlyphs" >DATAC</text>
<text x="942.5" y="287.1" font-size="8.2" fill="#42639a" text-anchor="start" textLength="30.5" lengthAdjust="spacingAndGlyphs" >DATAD</text>
<text x="1030.5" y="270.5" font-size="8.2" fill="#42639a" text-anchor="end" textLength="46" lengthAdjust="spacingAndGlyphs" >COMBOUT</text>
<text x="987.5" y="255.5" font-size="10.5" fill="#5c5c5c" text-anchor="middle" textLength="26.2" lengthAdjust="spacingAndGlyphs" >out~2</text>
<text x="987.5" y="306.1" font-size="9.4" fill="#5c5c5c" text-anchor="middle" textLength="95" lengthAdjust="spacingAndGlyphs" >LOGIC_CELL_COMB</text>
<path d="M842,385.1 L933.3,385.1" fill="none" stroke="#333333" stroke-width="1.4" stroke-linejoin="miter"/>
<rect x="943.2" y="377.8" width="92.59999999999991" height="34.10000000000002" fill="#c4c4c4"/>
<rect x="941.85" y="376.45" width="91.29999999999991" height="32.800000000000026" fill="#b3aafc" stroke="#333" stroke-width="1.3"/>
<line x1="933.3" y1="385.1" x2="941.2" y2="385.1" stroke="#134f80" stroke-width="1.4"/>
<line x1="933.3" y1="401.70000000000005" x2="941.2" y2="401.70000000000005" stroke="#134f80" stroke-width="1.4"/>
<line x1="1033.8" y1="385.1" x2="1042" y2="385.1" stroke="#134f80" stroke-width="1.4"/>
<text x="942.5" y="386.1" font-size="8.2" fill="#42639a" text-anchor="start" textLength="30.5" lengthAdjust="spacingAndGlyphs" >DATAB</text>
<text x="942.5" y="402.70000000000005" font-size="8.2" fill="#42639a" text-anchor="start" textLength="30.5" lengthAdjust="spacingAndGlyphs" >DATAD</text>
<text x="1030.5" y="386.1" font-size="8.2" fill="#42639a" text-anchor="end" textLength="46" lengthAdjust="spacingAndGlyphs" >COMBOUT</text>
<text x="987.5" y="371.1" font-size="10.5" fill="#5c5c5c" text-anchor="middle" textLength="26.2" lengthAdjust="spacingAndGlyphs" >out~0</text>
<text x="987.5" y="421.70000000000005" font-size="9.4" fill="#5c5c5c" text-anchor="middle" textLength="95" lengthAdjust="spacingAndGlyphs" >LOGIC_CELL_COMB</text>
<path d="M842,451.3 L933.3,451.3" fill="none" stroke="#333333" stroke-width="1.4" stroke-linejoin="miter"/>
<rect x="943.2" y="445.4" width="92.59999999999991" height="34.10000000000002" fill="#c4c4c4"/>
<rect x="941.85" y="444.04999999999995" width="91.29999999999991" height="32.800000000000026" fill="#b3aafc" stroke="#333" stroke-width="1.3"/>
<line x1="933.3" y1="451.3" x2="941.2" y2="451.3" stroke="#134f80" stroke-width="1.4"/>
<line x1="933.3" y1="468.6" x2="941.2" y2="468.6" stroke="#134f80" stroke-width="1.4"/>
<line x1="1033.8" y1="451.3" x2="1042" y2="451.3" stroke="#134f80" stroke-width="1.4"/>
<text x="942.5" y="453.7" font-size="8.2" fill="#42639a" text-anchor="start" textLength="30.5" lengthAdjust="spacingAndGlyphs" >DATAA</text>
<text x="942.5" y="470.3" font-size="8.2" fill="#42639a" text-anchor="start" textLength="30.5" lengthAdjust="spacingAndGlyphs" >DATAD</text>
<text x="1030.5" y="453.7" font-size="8.2" fill="#42639a" text-anchor="end" textLength="46" lengthAdjust="spacingAndGlyphs" >COMBOUT</text>
<text x="987.5" y="438.7" font-size="10.5" fill="#5c5c5c" text-anchor="middle" textLength="26.2" lengthAdjust="spacingAndGlyphs" >out~3</text>
<text x="987.5" y="489.3" font-size="9.4" fill="#5c5c5c" text-anchor="middle" textLength="95" lengthAdjust="spacingAndGlyphs" >LOGIC_CELL_COMB</text>
<path d="M842,518.6 L933.3,518.6" fill="none" stroke="#333333" stroke-width="1.4" stroke-linejoin="miter"/>
<rect x="943.2" y="511.3" width="92.59999999999991" height="34.099999999999966" fill="#c4c4c4"/>
<rect x="941.85" y="509.95" width="91.29999999999991" height="32.79999999999997" fill="#b3aafc" stroke="#333" stroke-width="1.3"/>
<line x1="933.3" y1="518.6" x2="941.2" y2="518.6" stroke="#134f80" stroke-width="1.4"/>
<line x1="933.3" y1="535.2" x2="941.2" y2="535.2" stroke="#134f80" stroke-width="1.4"/>
<line x1="1033.8" y1="518.6" x2="1042" y2="518.6" stroke="#134f80" stroke-width="1.4"/>
<text x="942.5" y="519.6" font-size="8.2" fill="#42639a" text-anchor="start" textLength="30.5" lengthAdjust="spacingAndGlyphs" >DATAA</text>
<text x="942.5" y="536.2" font-size="8.2" fill="#42639a" text-anchor="start" textLength="30.5" lengthAdjust="spacingAndGlyphs" >DATAD</text>
<text x="1030.5" y="519.6" font-size="8.2" fill="#42639a" text-anchor="end" textLength="46" lengthAdjust="spacingAndGlyphs" >COMBOUT</text>
<text x="987.5" y="504.6" font-size="10.5" fill="#5c5c5c" text-anchor="middle" textLength="26.2" lengthAdjust="spacingAndGlyphs" >out~4</text>
<text x="987.5" y="555.2" font-size="9.4" fill="#5c5c5c" text-anchor="middle" textLength="95" lengthAdjust="spacingAndGlyphs" >LOGIC_CELL_COMB</text>
<path d="M842,584.8 L933.3,584.8" fill="none" stroke="#333333" stroke-width="1.4" stroke-linejoin="miter"/>
<rect x="943.2" y="578.9" width="92.59999999999991" height="34.09999999999991" fill="#c4c4c4"/>
<rect x="941.85" y="577.55" width="91.29999999999991" height="32.79999999999991" fill="#b3aafc" stroke="#333" stroke-width="1.3"/>
<line x1="933.3" y1="584.8" x2="941.2" y2="584.8" stroke="#134f80" stroke-width="1.4"/>
<line x1="933.3" y1="602.1" x2="941.2" y2="602.1" stroke="#134f80" stroke-width="1.4"/>
<line x1="1033.8" y1="584.8" x2="1042" y2="584.8" stroke="#134f80" stroke-width="1.4"/>
<text x="942.5" y="587.1999999999999" font-size="8.2" fill="#42639a" text-anchor="start" textLength="30.5" lengthAdjust="spacingAndGlyphs" >DATAA</text>
<text x="942.5" y="603.8" font-size="8.2" fill="#42639a" text-anchor="start" textLength="30.5" lengthAdjust="spacingAndGlyphs" >DATAD</text>
<text x="1030.5" y="587.1999999999999" font-size="8.2" fill="#42639a" text-anchor="end" textLength="46" lengthAdjust="spacingAndGlyphs" >COMBOUT</text>
<text x="987.5" y="572.1999999999999" font-size="10.5" fill="#5c5c5c" text-anchor="middle" textLength="26.2" lengthAdjust="spacingAndGlyphs" >out~5</text>
<text x="987.5" y="622.8" font-size="9.4" fill="#5c5c5c" text-anchor="middle" textLength="95" lengthAdjust="spacingAndGlyphs" >LOGIC_CELL_COMB</text>
<path d="M842,652.0 L933.3,652.0" fill="none" stroke="#333333" stroke-width="1.4" stroke-linejoin="miter"/>
<rect x="943.2" y="644.7" width="92.59999999999991" height="34.09999999999991" fill="#c4c4c4"/>
<rect x="941.85" y="643.35" width="91.29999999999991" height="32.79999999999991" fill="#b3aafc" stroke="#333" stroke-width="1.3"/>
<line x1="933.3" y1="652.0" x2="941.2" y2="652.0" stroke="#134f80" stroke-width="1.4"/>
<line x1="933.3" y1="668.6" x2="941.2" y2="668.6" stroke="#134f80" stroke-width="1.4"/>
<line x1="1033.8" y1="652.0" x2="1042" y2="652.0" stroke="#134f80" stroke-width="1.4"/>
<text x="942.5" y="653.0" font-size="8.2" fill="#42639a" text-anchor="start" textLength="30.5" lengthAdjust="spacingAndGlyphs" >DATAA</text>
<text x="942.5" y="669.6" font-size="8.2" fill="#42639a" text-anchor="start" textLength="30.5" lengthAdjust="spacingAndGlyphs" >DATAD</text>
<text x="1030.5" y="653.0" font-size="8.2" fill="#42639a" text-anchor="end" textLength="46" lengthAdjust="spacingAndGlyphs" >COMBOUT</text>
<text x="987.5" y="638.0" font-size="10.5" fill="#5c5c5c" text-anchor="middle" textLength="26.2" lengthAdjust="spacingAndGlyphs" >out~6</text>
<text x="987.5" y="688.6" font-size="9.4" fill="#5c5c5c" text-anchor="middle" textLength="95" lengthAdjust="spacingAndGlyphs" >LOGIC_CELL_COMB</text>
<path d="M842,718.2 L933.3,718.2" fill="none" stroke="#333333" stroke-width="1.4" stroke-linejoin="miter"/>
<rect x="943.2" y="712.7" width="92.59999999999991" height="34.09999999999991" fill="#c4c4c4"/>
<rect x="941.85" y="711.35" width="91.29999999999991" height="32.79999999999991" fill="#b3aafc" stroke="#333" stroke-width="1.3"/>
<line x1="933.3" y1="718.2" x2="941.2" y2="718.2" stroke="#134f80" stroke-width="1.4"/>
<line x1="933.3" y1="735.7" x2="941.2" y2="735.7" stroke="#134f80" stroke-width="1.4"/>
<line x1="1033.8" y1="718.2" x2="1042" y2="718.2" stroke="#134f80" stroke-width="1.4"/>
<text x="942.5" y="721.0" font-size="8.2" fill="#42639a" text-anchor="start" textLength="30.5" lengthAdjust="spacingAndGlyphs" >DATAA</text>
<text x="942.5" y="737.6" font-size="8.2" fill="#42639a" text-anchor="start" textLength="30.5" lengthAdjust="spacingAndGlyphs" >DATAD</text>
<text x="1030.5" y="721.0" font-size="8.2" fill="#42639a" text-anchor="end" textLength="46" lengthAdjust="spacingAndGlyphs" >COMBOUT</text>
<text x="987.5" y="706.0" font-size="10.5" fill="#5c5c5c" text-anchor="middle" textLength="26.2" lengthAdjust="spacingAndGlyphs" >out~7</text>
<text x="987.5" y="756.6" font-size="9.4" fill="#5c5c5c" text-anchor="middle" textLength="95" lengthAdjust="spacingAndGlyphs" >LOGIC_CELL_COMB</text>
<path d="M933.3,218.64999999999998 L918.0,218.64999999999998 L918.0,769.0 L842,769.0" fill="none" stroke="#333333" stroke-width="1.4" stroke-linejoin="miter"/>
<path d="M918.0,285.6 L933.3,285.6" fill="none" stroke="#333333" stroke-width="1.4" stroke-linejoin="miter"/>
<rect x="915.75" y="283.35" width="4.5" height="4.5" fill="#2a2a2a"/>
<path d="M918.0,401.70000000000005 L933.3,401.70000000000005" fill="none" stroke="#333333" stroke-width="1.4" stroke-linejoin="miter"/>
<rect x="915.75" y="399.45000000000005" width="4.5" height="4.5" fill="#2a2a2a"/>
<path d="M918.0,468.6 L933.3,468.6" fill="none" stroke="#333333" stroke-width="1.4" stroke-linejoin="miter"/>
<rect x="915.75" y="466.35" width="4.5" height="4.5" fill="#2a2a2a"/>
<path d="M918.0,535.2 L933.3,535.2" fill="none" stroke="#333333" stroke-width="1.4" stroke-linejoin="miter"/>
<rect x="915.75" y="532.95" width="4.5" height="4.5" fill="#2a2a2a"/>
<path d="M918.0,602.1 L933.3,602.1" fill="none" stroke="#333333" stroke-width="1.4" stroke-linejoin="miter"/>
<rect x="915.75" y="599.85" width="4.5" height="4.5" fill="#2a2a2a"/>
<path d="M918.0,668.6 L933.3,668.6" fill="none" stroke="#333333" stroke-width="1.4" stroke-linejoin="miter"/>
<rect x="915.75" y="666.35" width="4.5" height="4.5" fill="#2a2a2a"/>
<path d="M918.0,735.7 L933.3,735.7" fill="none" stroke="#333333" stroke-width="1.4" stroke-linejoin="miter"/>
<rect x="915.75" y="733.45" width="4.5" height="4.5" fill="#2a2a2a"/>
<path d="M842,335.4 L933.3,335.4" fill="none" stroke="#333333" stroke-width="1.4" stroke-linejoin="miter"/>
<rect x="943.2" y="328.7" width="75.69999999999993" height="16.899999999999977" fill="#c4c4c4"/>
<rect x="941.85" y="327.34999999999997" width="74.39999999999993" height="15.599999999999977" fill="#72abab" stroke="#333" stroke-width="1.3"/>
<line x1="933.3" y1="335.4" x2="941.2" y2="335.4" stroke="#134f80" stroke-width="1.4"/>
<line x1="1016.9" y1="335.4" x2="1025" y2="335.4" stroke="#134f80" stroke-width="1.4"/>
<text x="943" y="338.29999999999995" font-size="8.2" fill="#42639a" text-anchor="start" textLength="25" lengthAdjust="spacingAndGlyphs" >INCLK</text>
<text x="1014.5" y="338.29999999999995" font-size="8.2" fill="#42639a" text-anchor="end" textLength="36" lengthAdjust="spacingAndGlyphs" >OUTCLK</text>
<text x="978.7" y="321.79999999999995" font-size="10.5" fill="#5c5c5c" text-anchor="middle" textLength="72.5" lengthAdjust="spacingAndGlyphs" >clk~inputclkctrl</text>
<text x="978.2" y="354.5" font-size="10" fill="#5c5c5c" text-anchor="middle" textLength="41.6" lengthAdjust="spacingAndGlyphs" >CLKCTRL</text>
<path d="M1025,335.4 L1075.2,335.4" fill="none" stroke="#333333" stroke-width="1.4" stroke-linejoin="miter"/>
<rect x="1072.95" y="333.15" width="4.5" height="4.5" fill="#2a2a2a"/>
<path d="M1042,202.2 L1058.6,202.2 L1058.6,226.3 L1090,226.3" fill="none" stroke="#333333" stroke-width="1.4" stroke-linejoin="miter"/>
<rect x="1102.2" y="195.0" width="50.700000000000045" height="51.80000000000001" fill="#c4c4c4"/>
<rect x="1100.8500000000001" y="193.65" width="49.40000000000005" height="50.500000000000014" fill="#72abab" stroke="#333" stroke-width="1.3"/>
<line x1="1090" y1="226.3" x2="1100.2" y2="226.3" stroke="#134f80" stroke-width="1.4"/>
<line x1="1090" y1="210.0" x2="1100.2" y2="210.0" stroke="#134f80" stroke-width="1.4"/>
<line x1="1150.9" y1="218.8" x2="1160" y2="218.8" stroke="#134f80" stroke-width="1.4"/>
<path d="M1100.7,208.0 H1103.7 Q1105.5,208.0 1105.5,210.0 Q1105.5,212.0 1103.7,212.0 H1100.7 M1105.5,209.7 L1108.0,207.4" fill="none" stroke="#2a2a2a" stroke-width="1"/>
<text x="1108" y="209.6" font-size="8" fill="#42639a" text-anchor="start" textLength="16" lengthAdjust="spacingAndGlyphs" >CLK</text>
<text x="1102" y="227.9" font-size="8.2" fill="#42639a" text-anchor="start" >D</text>
<text x="1148.5" y="219.4" font-size="8.5" fill="#42639a" text-anchor="end" >Q</text>
<text x="1125" y="188.5" font-size="10.5" fill="#5c5c5c" text-anchor="middle" textLength="56" lengthAdjust="spacingAndGlyphs" >out[1]~reg0</text>
<path d="M1160,218.8 L1200,218.8" fill="none" stroke="#333333" stroke-width="1.4" stroke-linejoin="miter"/>
<path d="M1042,268.5 L1058.6,268.5 L1058.6,293.8 L1090,293.8" fill="none" stroke="#333333" stroke-width="1.4" stroke-linejoin="miter"/>
<rect x="1102.2" y="261.3" width="50.700000000000045" height="50.89999999999998" fill="#c4c4c4"/>
<rect x="1100.8500000000001" y="259.95" width="49.40000000000005" height="49.59999999999998" fill="#72abab" stroke="#333" stroke-width="1.3"/>
<line x1="1090" y1="293.8" x2="1100.2" y2="293.8" stroke="#134f80" stroke-width="1.4"/>
<line x1="1090" y1="277.0" x2="1100.2" y2="277.0" stroke="#134f80" stroke-width="1.4"/>
<line x1="1150.9" y1="284.9" x2="1160" y2="284.9" stroke="#134f80" stroke-width="1.4"/>
<path d="M1100.7,275.0 H1103.7 Q1105.5,275.0 1105.5,277.0 Q1105.5,279.0 1103.7,279.0 H1100.7 M1105.5,276.7 L1108.0,274.4" fill="none" stroke="#2a2a2a" stroke-width="1"/>
<text x="1108" y="276.6" font-size="8" fill="#42639a" text-anchor="start" textLength="16" lengthAdjust="spacingAndGlyphs" >CLK</text>
<text x="1102" y="295.40000000000003" font-size="8.2" fill="#42639a" text-anchor="start" >D</text>
<text x="1148.5" y="285.5" font-size="8.5" fill="#42639a" text-anchor="end" >Q</text>
<text x="1125" y="254.8" font-size="10.5" fill="#5c5c5c" text-anchor="middle" textLength="56" lengthAdjust="spacingAndGlyphs" >out[2]~reg0</text>
<path d="M1160,284.9 L1200,284.9" fill="none" stroke="#333333" stroke-width="1.4" stroke-linejoin="miter"/>
<path d="M1042,385.1 L1090,385.1" fill="none" stroke="#333333" stroke-width="1.4" stroke-linejoin="miter"/>
<rect x="1102.2" y="352.7" width="50.700000000000045" height="51.10000000000002" fill="#c4c4c4"/>
<rect x="1100.8500000000001" y="351.34999999999997" width="49.40000000000005" height="49.800000000000026" fill="#72abab" stroke="#333" stroke-width="1.3"/>
<line x1="1090" y1="385.1" x2="1100.2" y2="385.1" stroke="#134f80" stroke-width="1.4"/>
<line x1="1090" y1="368.9" x2="1100.2" y2="368.9" stroke="#134f80" stroke-width="1.4"/>
<line x1="1150.9" y1="376.1" x2="1160" y2="376.1" stroke="#134f80" stroke-width="1.4"/>
<path d="M1100.7,366.9 H1103.7 Q1105.5,366.9 1105.5,368.9 Q1105.5,370.9 1103.7,370.9 H1100.7 M1105.5,368.59999999999997 L1108.0,366.29999999999995" fill="none" stroke="#2a2a2a" stroke-width="1"/>
<text x="1108" y="368.5" font-size="8" fill="#42639a" text-anchor="start" textLength="16" lengthAdjust="spacingAndGlyphs" >CLK</text>
<text x="1102" y="386.70000000000005" font-size="8.2" fill="#42639a" text-anchor="start" >D</text>
<text x="1148.5" y="376.70000000000005" font-size="8.5" fill="#42639a" text-anchor="end" >Q</text>
<text x="1125" y="346.2" font-size="10.5" fill="#5c5c5c" text-anchor="middle" textLength="56" lengthAdjust="spacingAndGlyphs" >out[0]~reg0</text>
<path d="M1160,376.1 L1200,376.1" fill="none" stroke="#333333" stroke-width="1.4" stroke-linejoin="miter"/>
<path d="M1042,451.3 L1090,451.3" fill="none" stroke="#333333" stroke-width="1.4" stroke-linejoin="miter"/>
<rect x="1102.2" y="420.2" width="50.700000000000045" height="51.400000000000034" fill="#c4c4c4"/>
<rect x="1100.8500000000001" y="418.84999999999997" width="49.40000000000005" height="50.10000000000004" fill="#72abab" stroke="#333" stroke-width="1.3"/>
<line x1="1090" y1="451.3" x2="1100.2" y2="451.3" stroke="#134f80" stroke-width="1.4"/>
<line x1="1090" y1="434.6" x2="1100.2" y2="434.6" stroke="#134f80" stroke-width="1.4"/>
<line x1="1150.9" y1="443.6" x2="1160" y2="443.6" stroke="#134f80" stroke-width="1.4"/>
<path d="M1100.7,432.6 H1103.7 Q1105.5,432.6 1105.5,434.6 Q1105.5,436.6 1103.7,436.6 H1100.7 M1105.5,434.3 L1108.0,432.0" fill="none" stroke="#2a2a2a" stroke-width="1"/>
<text x="1108" y="434.20000000000005" font-size="8" fill="#42639a" text-anchor="start" textLength="16" lengthAdjust="spacingAndGlyphs" >CLK</text>
<text x="1102" y="452.90000000000003" font-size="8.2" fill="#42639a" text-anchor="start" >D</text>
<text x="1148.5" y="444.20000000000005" font-size="8.5" fill="#42639a" text-anchor="end" >Q</text>
<text x="1125" y="413.7" font-size="10.5" fill="#5c5c5c" text-anchor="middle" textLength="56" lengthAdjust="spacingAndGlyphs" >out[3]~reg0</text>
<path d="M1160,443.6 L1200,443.6" fill="none" stroke="#333333" stroke-width="1.4" stroke-linejoin="miter"/>
<path d="M1042,518.6 L1090,518.6" fill="none" stroke="#333333" stroke-width="1.4" stroke-linejoin="miter"/>
<rect x="1102.2" y="486.4" width="50.700000000000045" height="51.200000000000045" fill="#c4c4c4"/>
<rect x="1100.8500000000001" y="485.04999999999995" width="49.40000000000005" height="49.90000000000005" fill="#72abab" stroke="#333" stroke-width="1.3"/>
<line x1="1090" y1="518.6" x2="1100.2" y2="518.6" stroke="#134f80" stroke-width="1.4"/>
<line x1="1090" y1="502.2" x2="1100.2" y2="502.2" stroke="#134f80" stroke-width="1.4"/>
<line x1="1150.9" y1="509.9" x2="1160" y2="509.9" stroke="#134f80" stroke-width="1.4"/>
<path d="M1100.7,500.2 H1103.7 Q1105.5,500.2 1105.5,502.2 Q1105.5,504.2 1103.7,504.2 H1100.7 M1105.5,501.9 L1108.0,499.59999999999997" fill="none" stroke="#2a2a2a" stroke-width="1"/>
<text x="1108" y="501.8" font-size="8" fill="#42639a" text-anchor="start" textLength="16" lengthAdjust="spacingAndGlyphs" >CLK</text>
<text x="1102" y="520.2" font-size="8.2" fill="#42639a" text-anchor="start" >D</text>
<text x="1148.5" y="510.5" font-size="8.5" fill="#42639a" text-anchor="end" >Q</text>
<text x="1125" y="479.9" font-size="10.5" fill="#5c5c5c" text-anchor="middle" textLength="56" lengthAdjust="spacingAndGlyphs" >out[4]~reg0</text>
<path d="M1160,509.9 L1200,509.9" fill="none" stroke="#333333" stroke-width="1.4" stroke-linejoin="miter"/>
<path d="M1042,584.8 L1090,584.8" fill="none" stroke="#333333" stroke-width="1.4" stroke-linejoin="miter"/>
<rect x="1102.2" y="553.8" width="50.700000000000045" height="51.40000000000009" fill="#c4c4c4"/>
<rect x="1100.8500000000001" y="552.4499999999999" width="49.40000000000005" height="50.100000000000094" fill="#72abab" stroke="#333" stroke-width="1.3"/>
<line x1="1090" y1="584.8" x2="1100.2" y2="584.8" stroke="#134f80" stroke-width="1.4"/>
<line x1="1090" y1="568.5" x2="1100.2" y2="568.5" stroke="#134f80" stroke-width="1.4"/>
<line x1="1150.9" y1="577.2" x2="1160" y2="577.2" stroke="#134f80" stroke-width="1.4"/>
<path d="M1100.7,566.5 H1103.7 Q1105.5,566.5 1105.5,568.5 Q1105.5,570.5 1103.7,570.5 H1100.7 M1105.5,568.2 L1108.0,565.9" fill="none" stroke="#2a2a2a" stroke-width="1"/>
<text x="1108" y="568.1" font-size="8" fill="#42639a" text-anchor="start" textLength="16" lengthAdjust="spacingAndGlyphs" >CLK</text>
<text x="1102" y="586.4" font-size="8.2" fill="#42639a" text-anchor="start" >D</text>
<text x="1148.5" y="577.8000000000001" font-size="8.5" fill="#42639a" text-anchor="end" >Q</text>
<text x="1125" y="547.3" font-size="10.5" fill="#5c5c5c" text-anchor="middle" textLength="56" lengthAdjust="spacingAndGlyphs" >out[5]~reg0</text>
<path d="M1160,577.2 L1200,577.2" fill="none" stroke="#333333" stroke-width="1.4" stroke-linejoin="miter"/>
<path d="M1042,652.0 L1090,652.0" fill="none" stroke="#333333" stroke-width="1.4" stroke-linejoin="miter"/>
<rect x="1102.2" y="620.0" width="50.700000000000045" height="51.200000000000045" fill="#c4c4c4"/>
<rect x="1100.8500000000001" y="618.65" width="49.40000000000005" height="49.90000000000005" fill="#72abab" stroke="#333" stroke-width="1.3"/>
<line x1="1090" y1="652.0" x2="1100.2" y2="652.0" stroke="#134f80" stroke-width="1.4"/>
<line x1="1090" y1="635.6" x2="1100.2" y2="635.6" stroke="#134f80" stroke-width="1.4"/>
<line x1="1150.9" y1="643.2" x2="1160" y2="643.2" stroke="#134f80" stroke-width="1.4"/>
<path d="M1100.7,633.6 H1103.7 Q1105.5,633.6 1105.5,635.6 Q1105.5,637.6 1103.7,637.6 H1100.7 M1105.5,635.3000000000001 L1108.0,633.0" fill="none" stroke="#2a2a2a" stroke-width="1"/>
<text x="1108" y="635.2" font-size="8" fill="#42639a" text-anchor="start" textLength="16" lengthAdjust="spacingAndGlyphs" >CLK</text>
<text x="1102" y="653.6" font-size="8.2" fill="#42639a" text-anchor="start" >D</text>
<text x="1148.5" y="643.8000000000001" font-size="8.5" fill="#42639a" text-anchor="end" >Q</text>
<text x="1125" y="613.5" font-size="10.5" fill="#5c5c5c" text-anchor="middle" textLength="56" lengthAdjust="spacingAndGlyphs" >out[6]~reg0</text>
<path d="M1160,643.2 L1200,643.2" fill="none" stroke="#333333" stroke-width="1.4" stroke-linejoin="miter"/>
<path d="M1042,718.2 L1090,718.2" fill="none" stroke="#333333" stroke-width="1.4" stroke-linejoin="miter"/>
<rect x="1102.2" y="687.4" width="50.700000000000045" height="51.10000000000002" fill="#c4c4c4"/>
<rect x="1100.8500000000001" y="686.05" width="49.40000000000005" height="49.800000000000026" fill="#72abab" stroke="#333" stroke-width="1.3"/>
<line x1="1090" y1="718.2" x2="1100.2" y2="718.2" stroke="#134f80" stroke-width="1.4"/>
<line x1="1090" y1="701.6" x2="1100.2" y2="701.6" stroke="#134f80" stroke-width="1.4"/>
<line x1="1150.9" y1="710.8" x2="1160" y2="710.8" stroke="#134f80" stroke-width="1.4"/>
<path d="M1100.7,699.6 H1103.7 Q1105.5,699.6 1105.5,701.6 Q1105.5,703.6 1103.7,703.6 H1100.7 M1105.5,701.3000000000001 L1108.0,699.0" fill="none" stroke="#2a2a2a" stroke-width="1"/>
<text x="1108" y="701.2" font-size="8" fill="#42639a" text-anchor="start" textLength="16" lengthAdjust="spacingAndGlyphs" >CLK</text>
<text x="1102" y="719.8000000000001" font-size="8.2" fill="#42639a" text-anchor="start" >D</text>
<text x="1148.5" y="711.4" font-size="8.5" fill="#42639a" text-anchor="end" >Q</text>
<text x="1125" y="680.9" font-size="10.5" fill="#5c5c5c" text-anchor="middle" textLength="56" lengthAdjust="spacingAndGlyphs" >out[7]~reg0</text>
<path d="M1160,710.8 L1200,710.8" fill="none" stroke="#333333" stroke-width="1.4" stroke-linejoin="miter"/>
<path d="M1090,210.0 L1075.2,210.0 L1075.2,701.6 L1090,701.6" fill="none" stroke="#333333" stroke-width="1.4" stroke-linejoin="miter"/>
<path d="M1075.2,277.0 L1090,277.0" fill="none" stroke="#333333" stroke-width="1.4" stroke-linejoin="miter"/>
<rect x="1072.95" y="274.75" width="4.5" height="4.5" fill="#2a2a2a"/>
<path d="M1075.2,368.9 L1090,368.9" fill="none" stroke="#333333" stroke-width="1.4" stroke-linejoin="miter"/>
<rect x="1072.95" y="366.65" width="4.5" height="4.5" fill="#2a2a2a"/>
<path d="M1075.2,434.6 L1090,434.6" fill="none" stroke="#333333" stroke-width="1.4" stroke-linejoin="miter"/>
<rect x="1072.95" y="432.35" width="4.5" height="4.5" fill="#2a2a2a"/>
<path d="M1075.2,502.2 L1090,502.2" fill="none" stroke="#333333" stroke-width="1.4" stroke-linejoin="miter"/>
<rect x="1072.95" y="499.95" width="4.5" height="4.5" fill="#2a2a2a"/>
<path d="M1075.2,568.5 L1090,568.5" fill="none" stroke="#333333" stroke-width="1.4" stroke-linejoin="miter"/>
<rect x="1072.95" y="566.25" width="4.5" height="4.5" fill="#2a2a2a"/>
<path d="M1075.2,635.6 L1090,635.6" fill="none" stroke="#333333" stroke-width="1.4" stroke-linejoin="miter"/>
<rect x="1072.95" y="633.35" width="4.5" height="4.5" fill="#2a2a2a"/>
<rect x="1210.3" y="212.0" width="50.5" height="17.200000000000017" fill="#c4c4c4"/>
<rect x="1208.95" y="210.65" width="49.2" height="15.900000000000016" fill="#b3aafc" stroke="#333" stroke-width="1.3"/>
<line x1="1200" y1="218.8" x2="1208.3" y2="218.8" stroke="#134f80" stroke-width="1.4"/>
<line x1="1258.8" y1="218.8" x2="1267" y2="218.8" stroke="#134f80" stroke-width="1.4"/>
<text x="1210.3" y="221.3" font-size="7" fill="#42639a" text-anchor="start" >I</text>
<text x="1249.3" y="221.10000000000002" font-size="8.5" fill="#42639a" text-anchor="start" >O</text>
<text x="1233.5" y="205.20000000000002" font-size="10.5" fill="#5c5c5c" text-anchor="middle" textLength="64" lengthAdjust="spacingAndGlyphs" >out[1]~output</text>
<text x="1232.5" y="238.0" font-size="9.5" fill="#5c5c5c" text-anchor="middle" textLength="42.5" lengthAdjust="spacingAndGlyphs" >IO_OBUF</text>
<path d="M1267,218.8 L1307.0,218.8" fill="none" stroke="#333333" stroke-width="1.4" stroke-linejoin="miter"/>
<path d="M1310.0,213.8 L1305.5,216.3 L1305.5,216.8 L1300.5,217.3 L1300.5,219.3 L1304.0,219.8 L1304.0,221.3 L1310.0,222.8 Z" fill="#000"/>
<rect x="1210.3" y="278.09999999999997" width="50.5" height="17.19999999999999" fill="#c4c4c4"/>
<rect x="1208.95" y="276.74999999999994" width="49.2" height="15.899999999999988" fill="#b3aafc" stroke="#333" stroke-width="1.3"/>
<line x1="1200" y1="284.9" x2="1208.3" y2="284.9" stroke="#134f80" stroke-width="1.4"/>
<line x1="1258.8" y1="284.9" x2="1267" y2="284.9" stroke="#134f80" stroke-width="1.4"/>
<text x="1210.3" y="287.4" font-size="7" fill="#42639a" text-anchor="start" >I</text>
<text x="1249.3" y="287.2" font-size="8.5" fill="#42639a" text-anchor="start" >O</text>
<text x="1233.5" y="271.29999999999995" font-size="10.5" fill="#5c5c5c" text-anchor="middle" textLength="64" lengthAdjust="spacingAndGlyphs" >out[2]~output</text>
<text x="1232.5" y="304.09999999999997" font-size="9.5" fill="#5c5c5c" text-anchor="middle" textLength="42.5" lengthAdjust="spacingAndGlyphs" >IO_OBUF</text>
<path d="M1267,284.9 L1307.0,284.9" fill="none" stroke="#333333" stroke-width="1.4" stroke-linejoin="miter"/>
<path d="M1310.0,279.9 L1305.5,282.4 L1305.5,282.9 L1300.5,283.4 L1300.5,285.4 L1304.0,285.9 L1304.0,287.4 L1310.0,288.9 Z" fill="#000"/>
<rect x="1210.3" y="369.3" width="50.5" height="17.19999999999999" fill="#c4c4c4"/>
<rect x="1208.95" y="367.95" width="49.2" height="15.899999999999988" fill="#b3aafc" stroke="#333" stroke-width="1.3"/>
<line x1="1200" y1="376.1" x2="1208.3" y2="376.1" stroke="#134f80" stroke-width="1.4"/>
<line x1="1258.8" y1="376.1" x2="1267" y2="376.1" stroke="#134f80" stroke-width="1.4"/>
<text x="1210.3" y="378.6" font-size="7" fill="#42639a" text-anchor="start" >I</text>
<text x="1249.3" y="378.40000000000003" font-size="8.5" fill="#42639a" text-anchor="start" >O</text>
<text x="1233.5" y="362.5" font-size="10.5" fill="#5c5c5c" text-anchor="middle" textLength="64" lengthAdjust="spacingAndGlyphs" >out[0]~output</text>
<text x="1232.5" y="395.3" font-size="9.5" fill="#5c5c5c" text-anchor="middle" textLength="42.5" lengthAdjust="spacingAndGlyphs" >IO_OBUF</text>
<path d="M1267,376.1 L1307.0,376.1" fill="none" stroke="#333333" stroke-width="1.4" stroke-linejoin="miter"/>
<path d="M1310.0,371.1 L1305.5,373.6 L1305.5,374.1 L1300.5,374.6 L1300.5,376.6 L1304.0,377.1 L1304.0,378.6 L1310.0,380.1 Z" fill="#000"/>
<rect x="1210.3" y="436.8" width="50.5" height="17.19999999999999" fill="#c4c4c4"/>
<rect x="1208.95" y="435.45" width="49.2" height="15.899999999999988" fill="#b3aafc" stroke="#333" stroke-width="1.3"/>
<line x1="1200" y1="443.6" x2="1208.3" y2="443.6" stroke="#134f80" stroke-width="1.4"/>
<line x1="1258.8" y1="443.6" x2="1267" y2="443.6" stroke="#134f80" stroke-width="1.4"/>
<text x="1210.3" y="446.1" font-size="7" fill="#42639a" text-anchor="start" >I</text>
<text x="1249.3" y="445.90000000000003" font-size="8.5" fill="#42639a" text-anchor="start" >O</text>
<text x="1233.5" y="430.0" font-size="10.5" fill="#5c5c5c" text-anchor="middle" textLength="64" lengthAdjust="spacingAndGlyphs" >out[3]~output</text>
<text x="1232.5" y="462.8" font-size="9.5" fill="#5c5c5c" text-anchor="middle" textLength="42.5" lengthAdjust="spacingAndGlyphs" >IO_OBUF</text>
<path d="M1267,443.6 L1307.0,443.6" fill="none" stroke="#333333" stroke-width="1.4" stroke-linejoin="miter"/>
<path d="M1310.0,438.6 L1305.5,441.1 L1305.5,441.6 L1300.5,442.1 L1300.5,444.1 L1304.0,444.6 L1304.0,446.1 L1310.0,447.6 Z" fill="#000"/>
<rect x="1210.3" y="503.09999999999997" width="50.5" height="17.19999999999999" fill="#c4c4c4"/>
<rect x="1208.95" y="501.74999999999994" width="49.2" height="15.899999999999988" fill="#b3aafc" stroke="#333" stroke-width="1.3"/>
<line x1="1200" y1="509.9" x2="1208.3" y2="509.9" stroke="#134f80" stroke-width="1.4"/>
<line x1="1258.8" y1="509.9" x2="1267" y2="509.9" stroke="#134f80" stroke-width="1.4"/>
<text x="1210.3" y="512.4" font-size="7" fill="#42639a" text-anchor="start" >I</text>
<text x="1249.3" y="512.1999999999999" font-size="8.5" fill="#42639a" text-anchor="start" >O</text>
<text x="1233.5" y="496.29999999999995" font-size="10.5" fill="#5c5c5c" text-anchor="middle" textLength="64" lengthAdjust="spacingAndGlyphs" >out[4]~output</text>
<text x="1232.5" y="529.1" font-size="9.5" fill="#5c5c5c" text-anchor="middle" textLength="42.5" lengthAdjust="spacingAndGlyphs" >IO_OBUF</text>
<path d="M1267,509.9 L1307.0,509.9" fill="none" stroke="#333333" stroke-width="1.4" stroke-linejoin="miter"/>
<path d="M1310.0,504.9 L1305.5,507.4 L1305.5,507.9 L1300.5,508.4 L1300.5,510.4 L1304.0,510.9 L1304.0,512.4 L1310.0,513.9 Z" fill="#000"/>
<rect x="1210.3" y="570.4000000000001" width="50.5" height="17.199999999999932" fill="#c4c4c4"/>
<rect x="1208.95" y="569.0500000000001" width="49.2" height="15.899999999999931" fill="#b3aafc" stroke="#333" stroke-width="1.3"/>
<line x1="1200" y1="577.2" x2="1208.3" y2="577.2" stroke="#134f80" stroke-width="1.4"/>
<line x1="1258.8" y1="577.2" x2="1267" y2="577.2" stroke="#134f80" stroke-width="1.4"/>
<text x="1210.3" y="579.7" font-size="7" fill="#42639a" text-anchor="start" >I</text>
<text x="1249.3" y="579.5" font-size="8.5" fill="#42639a" text-anchor="start" >O</text>
<text x="1233.5" y="563.6" font-size="10.5" fill="#5c5c5c" text-anchor="middle" textLength="64" lengthAdjust="spacingAndGlyphs" >out[5]~output</text>
<text x="1232.5" y="596.4000000000001" font-size="9.5" fill="#5c5c5c" text-anchor="middle" textLength="42.5" lengthAdjust="spacingAndGlyphs" >IO_OBUF</text>
<path d="M1267,577.2 L1307.0,577.2" fill="none" stroke="#333333" stroke-width="1.4" stroke-linejoin="miter"/>
<path d="M1310.0,572.2 L1305.5,574.7 L1305.5,575.2 L1300.5,575.7 L1300.5,577.7 L1304.0,578.2 L1304.0,579.7 L1310.0,581.2 Z" fill="#000"/>
<rect x="1210.3" y="636.4000000000001" width="50.5" height="17.199999999999932" fill="#c4c4c4"/>
<rect x="1208.95" y="635.0500000000001" width="49.2" height="15.899999999999931" fill="#b3aafc" stroke="#333" stroke-width="1.3"/>
<line x1="1200" y1="643.2" x2="1208.3" y2="643.2" stroke="#134f80" stroke-width="1.4"/>
<line x1="1258.8" y1="643.2" x2="1267" y2="643.2" stroke="#134f80" stroke-width="1.4"/>
<text x="1210.3" y="645.7" font-size="7" fill="#42639a" text-anchor="start" >I</text>
<text x="1249.3" y="645.5" font-size="8.5" fill="#42639a" text-anchor="start" >O</text>
<text x="1233.5" y="629.6" font-size="10.5" fill="#5c5c5c" text-anchor="middle" textLength="64" lengthAdjust="spacingAndGlyphs" >out[6]~output</text>
<text x="1232.5" y="662.4000000000001" font-size="9.5" fill="#5c5c5c" text-anchor="middle" textLength="42.5" lengthAdjust="spacingAndGlyphs" >IO_OBUF</text>
<path d="M1267,643.2 L1307.0,643.2" fill="none" stroke="#333333" stroke-width="1.4" stroke-linejoin="miter"/>
<path d="M1310.0,638.2 L1305.5,640.7 L1305.5,641.2 L1300.5,641.7 L1300.5,643.7 L1304.0,644.2 L1304.0,645.7 L1310.0,647.2 Z" fill="#000"/>
<rect x="1210.3" y="704.0" width="50.5" height="17.199999999999932" fill="#c4c4c4"/>
<rect x="1208.95" y="702.65" width="49.2" height="15.899999999999931" fill="#b3aafc" stroke="#333" stroke-width="1.3"/>
<line x1="1200" y1="710.8" x2="1208.3" y2="710.8" stroke="#134f80" stroke-width="1.4"/>
<line x1="1258.8" y1="710.8" x2="1267" y2="710.8" stroke="#134f80" stroke-width="1.4"/>
<text x="1210.3" y="713.3" font-size="7" fill="#42639a" text-anchor="start" >I</text>
<text x="1249.3" y="713.0999999999999" font-size="8.5" fill="#42639a" text-anchor="start" >O</text>
<text x="1233.5" y="697.1999999999999" font-size="10.5" fill="#5c5c5c" text-anchor="middle" textLength="64" lengthAdjust="spacingAndGlyphs" >out[7]~output</text>
<text x="1232.5" y="730.0" font-size="9.5" fill="#5c5c5c" text-anchor="middle" textLength="42.5" lengthAdjust="spacingAndGlyphs" >IO_OBUF</text>
<path d="M1267,710.8 L1307.0,710.8" fill="none" stroke="#333333" stroke-width="1.4" stroke-linejoin="miter"/>
<path d="M1310.0,705.8 L1305.5,708.3 L1305.5,708.8 L1300.5,709.3 L1300.5,711.3 L1304.0,711.8 L1304.0,713.3 L1310.0,714.8 Z" fill="#000"/>
<line x1="1308.5" y1="213.4" x2="1308.5" y2="714.5" stroke="#262626" stroke-width="3"/>
<line x1="1308.5" y1="217.6" x2="1324.5" y2="217.6" stroke="#262626" stroke-width="2.4"/>
<path d="M1325.4,212.15 L1337.5000000000002,212.15 L1342.3000000000002,218.0 L1337.5000000000002,223.85 L1325.4,223.85 Z" fill="#fff" stroke="#0000ff" stroke-width="3.0" stroke-linejoin="miter" stroke-miterlimit="3"/>
<text x="1349" y="221.2" font-size="10" fill="#5c5c5c" text-anchor="start" textLength="39.5" lengthAdjust="spacingAndGlyphs" >out[0..7]</text>
<rect x="1210.3" y="754.7" width="50.5" height="17.299999999999955" fill="#c4c4c4"/>
<rect x="1208.95" y="753.35" width="49.2" height="15.999999999999954" fill="#b3aafc" stroke="#333" stroke-width="1.3"/>
<line x1="1200.5" y1="760.2" x2="1208.3" y2="760.2" stroke="#134f80" stroke-width="1.4"/>
<line x1="1258.8" y1="760.2" x2="1267" y2="760.2" stroke="#134f80" stroke-width="1.4"/>
<text x="1210.3" y="764.2" font-size="7" fill="#42639a" text-anchor="start" >I</text>
<text x="1249.3" y="764.0" font-size="8.5" fill="#42639a" text-anchor="start" >O</text>
<path d="M1267,760.2 L1325.2,760.2" fill="none" stroke="#333333" stroke-width="1.4" stroke-linejoin="miter"/>
<path d="M1325.9,754.35 L1338.0,754.35 L1343.0,760.5 L1338.0,766.65 L1325.9,766.65 Z" fill="#fff" stroke="#0000ff" stroke-width="1.4" stroke-linejoin="miter" stroke-miterlimit="3"/>
<text x="1349.3" y="763.6" font-size="10.3" fill="#5c5c5c" text-anchor="start" textLength="82.6" lengthAdjust="spacingAndGlyphs" >~ALTERA_DCLK~</text>
<text x="1178" y="748.3000000000001" font-size="10.3" fill="#5c5c5c" text-anchor="start" textLength="110.3" lengthAdjust="spacingAndGlyphs" >~ALTERA_DCLK~~obuf</text>
<text x="1188" y="756.6" font-size="8.5" fill="#5c5c5c" text-anchor="start" textLength="19.3" lengthAdjust="spacingAndGlyphs" >1'h0</text>
<text x="1232.5" y="779.8000000000001" font-size="9.5" fill="#5c5c5c" text-anchor="middle" textLength="42.5" lengthAdjust="spacingAndGlyphs" >IO_OBUF</text>
<rect x="1210.3" y="804.0999999999999" width="50.5" height="17.299999999999955" fill="#c4c4c4"/>
<rect x="1208.95" y="802.7499999999999" width="49.2" height="15.999999999999954" fill="#b3aafc" stroke="#333" stroke-width="1.3"/>
<line x1="1200.5" y1="809.8" x2="1208.3" y2="809.8" stroke="#134f80" stroke-width="1.4"/>
<line x1="1258.8" y1="809.8" x2="1267" y2="809.8" stroke="#134f80" stroke-width="1.4"/>
<text x="1210.3" y="813.5999999999999" font-size="7" fill="#42639a" text-anchor="start" >I</text>
<text x="1249.3" y="813.3999999999999" font-size="8.5" fill="#42639a" text-anchor="start" >O</text>
<path d="M1267,809.8 L1325.2,809.8" fill="none" stroke="#333333" stroke-width="1.4" stroke-linejoin="miter"/>
<path d="M1325.9,803.9499999999999 L1338.0,803.9499999999999 L1343.0,810.0999999999999 L1338.0,816.2499999999999 L1325.9,816.2499999999999 Z" fill="#fff" stroke="#0000ff" stroke-width="1.4" stroke-linejoin="miter" stroke-miterlimit="3"/>
<text x="1349.3" y="813.1999999999999" font-size="10.3" fill="#5c5c5c" text-anchor="start" textLength="82.6" lengthAdjust="spacingAndGlyphs" >~ALTERA_nCEO~</text>
<text x="1178" y="797.9" font-size="10.3" fill="#5c5c5c" text-anchor="start" textLength="110.3" lengthAdjust="spacingAndGlyphs" >~ALTERA_nCEO~~obuf</text>
<text x="1188" y="806.1999999999999" font-size="8.5" fill="#5c5c5c" text-anchor="start" textLength="19.3" lengthAdjust="spacingAndGlyphs" >1'h1</text>
<text x="1176.7" y="830.5999999999999" font-size="9.5" fill="#5c5c5c" text-anchor="start" textLength="113.8" lengthAdjust="spacingAndGlyphs" >IO_OBUF (OPEN DRAIN)</text>
</g>
</svg>
</body></html>
